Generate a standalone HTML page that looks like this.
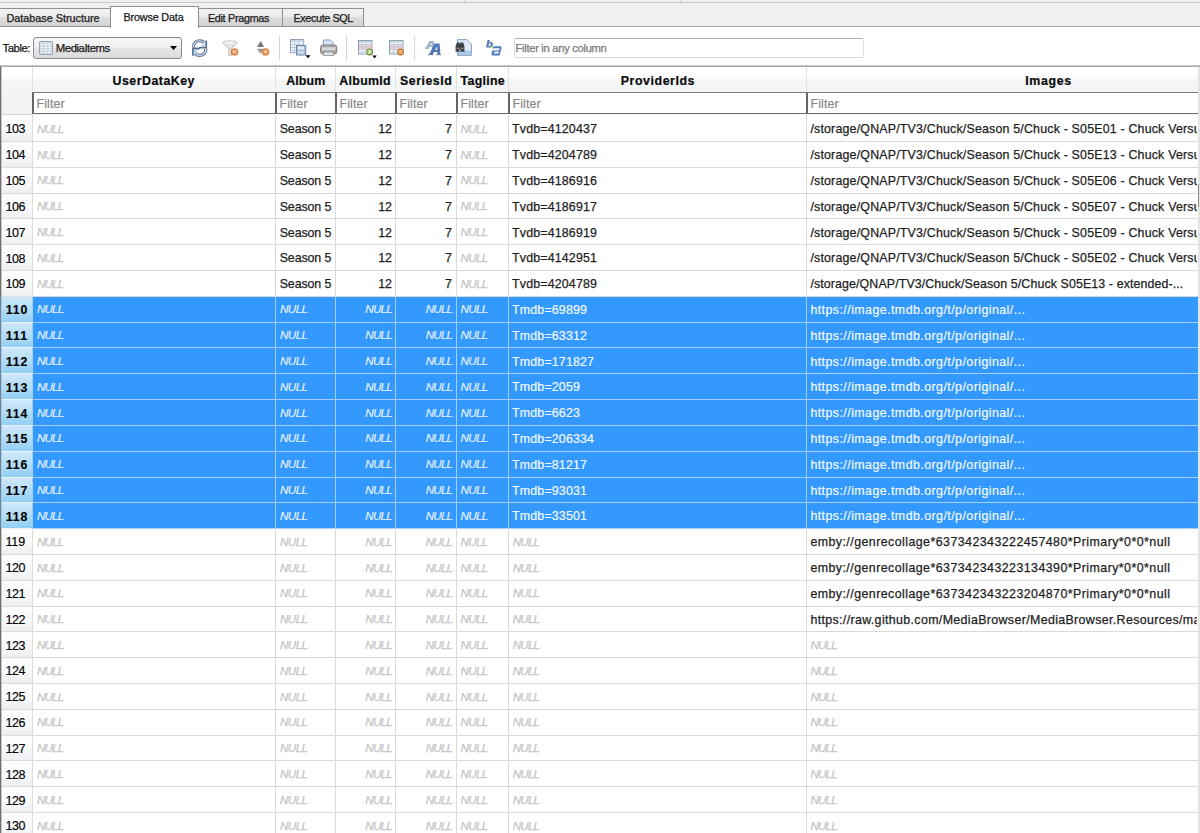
<!DOCTYPE html><html><head><meta charset="utf-8"><style>*{box-sizing:border-box;margin:0;padding:0}html,body{width:1200px;height:833px;overflow:hidden;background:#fff;font-family:"Liberation Sans",sans-serif}body{position:relative}.a{position:absolute}.t{position:absolute;white-space:pre;line-height:1}</style></head><body><div class="a" style="left:0;top:0;width:1200px;height:27px;background:#f0f0f0"></div><div class="a" style="left:0;top:2px;width:1200px;height:1px;background:#c9c9c9"></div><div class="a" style="left:464px;top:0;width:1px;height:2px;background:#d0d0d0"></div><div class="a" style="left:680px;top:0;width:1px;height:2px;background:#d0d0d0"></div><div class="a" style="left:0;top:26px;width:1200px;height:1px;background:#a7a7a7"></div><div class="a" style="left:-1px;top:8px;width:112px;height:19px;background:linear-gradient(#f2f2f2,#ebebeb 45%,#dedede 50%,#d2d2d2);border:1px solid #8e8f8f"></div><div class="a" style="left:198px;top:8px;width:85px;height:19px;background:linear-gradient(#f2f2f2,#ebebeb 45%,#dedede 50%,#d2d2d2);border:1px solid #8e8f8f"></div><div class="a" style="left:282px;top:8px;width:82px;height:19px;background:linear-gradient(#f2f2f2,#ebebeb 45%,#dedede 50%,#d2d2d2);border:1px solid #8e8f8f"></div><div class="a" style="left:110px;top:6px;width:89px;height:22px;background:#fff;border:1px solid #8e8f8f;border-bottom:none"></div><div class="t" style="left:6.50px;top:13.06px;font-size:10.8px;color:#1a1a1a;letter-spacing:-0.002px;-webkit-text-stroke:0.25px #1a1a1a">Database Structure</div><div class="t" style="left:123.50px;top:12.06px;font-size:10.8px;color:#1a1a1a;letter-spacing:-0.165px;-webkit-text-stroke:0.25px #1a1a1a">Browse Data</div><div class="t" style="left:207.90px;top:13.16px;font-size:10.8px;color:#1a1a1a;letter-spacing:-0.293px;-webkit-text-stroke:0.25px #1a1a1a">Edit Pragmas</div><div class="t" style="left:293.50px;top:13.06px;font-size:10.8px;color:#1a1a1a;letter-spacing:-0.375px;-webkit-text-stroke:0.25px #1a1a1a">Execute SQL</div><div class="t" style="left:2.50px;top:42.65px;font-size:11.4px;color:#1a1a1a;letter-spacing:-0.484px;-webkit-text-stroke:0.25px #1a1a1a">Table:</div><div class="a" style="left:33px;top:37px;width:149px;height:22px;border:1px solid #8a8a8a;border-radius:3px;background:linear-gradient(#f6f6f6,#efefef 50%,#e5e5e5 52%,#dcdcdc)"></div><svg class="a" style="left:39px;top:41px" width="14" height="14" viewBox="0 0 14 14">
<rect x="0.6" y="0.6" width="12.8" height="12.8" rx="1" fill="#eaf2fb" stroke="#98a3ae" stroke-width="1.1"/>
<rect x="1.2" y="1.2" width="11.6" height="1.8" fill="#d2dce6"/>
<path d="M1 5H13M1 7.6H13M1 10.2H13M4.6 3V13M8.6 3V13" stroke="#c0ccd8" stroke-width="0.8"/></svg><div class="t" style="left:55.80px;top:43.05px;font-size:11.4px;color:#1a1a1a;letter-spacing:-0.487px;-webkit-text-stroke:0.25px #1a1a1a">MediaItems</div><svg class="a" style="left:170px;top:46px" width="8" height="5" viewBox="0 0 8 5"><path d="M0 0H7L3.5 4Z" fill="#000"/></svg><svg class="a" style="left:191px;top:39px" width="17" height="18" viewBox="0 0 17 18"><g><path d="M2.3 8.4 C2.3 4.4 5 1.8 8.8 1.8 C10.6 1.8 12 2.5 13.2 3.8" fill="none" stroke="#5a6e92" stroke-width="3.1"/>
<path d="M2.3 8.4 C2.3 4.4 5 1.8 8.8 1.8 C10.6 1.8 12 2.5 13.2 3.8" fill="none" stroke="#d6e4f5" stroke-width="1.1"/>
<path d="M15.3 1.4 L15.3 8.8 L8.2 8.8 Z" fill="#c6d9f0"/>
<path d="M15.3 1.4 L15.3 8.8 L8.2 8.8" fill="none" stroke="#5a6e92" stroke-width="1.6"/></g><g transform="rotate(180 8.6 9.1)"><path d="M2.3 8.4 C2.3 4.4 5 1.8 8.8 1.8 C10.6 1.8 12 2.5 13.2 3.8" fill="none" stroke="#5a6e92" stroke-width="3.1"/>
<path d="M2.3 8.4 C2.3 4.4 5 1.8 8.8 1.8 C10.6 1.8 12 2.5 13.2 3.8" fill="none" stroke="#d6e4f5" stroke-width="1.1"/>
<path d="M15.3 1.4 L15.3 8.8 L8.2 8.8 Z" fill="#c6d9f0"/>
<path d="M15.3 1.4 L15.3 8.8 L8.2 8.8" fill="none" stroke="#5a6e92" stroke-width="1.6"/></g></svg><svg class="a" style="left:222px;top:40px" width="18" height="17" viewBox="0 0 18 17">
<path d="M1.2 2.6 C1.2 0.4 14.8 0.4 14.8 2.6 C14.8 4.2 10 7.5 9.3 8.6 L9.3 15.6 L6.8 15.6 L6.8 8.6 C6 7.5 1.2 4.2 1.2 2.6Z" fill="#e4e4e4" stroke="#bcbcbc" stroke-width="1"/>
<ellipse cx="8" cy="2.6" rx="5.5" ry="1.2" fill="#f4f4f4"/>
<circle cx="12.6" cy="11.9" r="3.7" fill="#c77a3e"/>
<circle cx="12.6" cy="11.7" r="2.6" fill="#eea36a"/>
<rect x="11" y="11.2" width="3.2" height="1.2" fill="#ffd9b0"/></svg><svg class="a" style="left:256px;top:40px" width="14" height="17" viewBox="0 0 14 17">
<path d="M1 7 L4.6 1 L8.2 7Z" fill="#767676"/>
<path d="M1 8.8 L7.6 8.8 L4.3 13.8Z" fill="#9c9c9c"/>
<circle cx="9.5" cy="11.9" r="3.7" fill="#c77a3e"/>
<circle cx="9.5" cy="11.7" r="2.6" fill="#eea36a"/>
<rect x="7.9" y="11.2" width="3.2" height="1.2" fill="#ffd9b0"/></svg><div class="a" style="left:279px;top:36px;width:1px;height:24px;background:#d6d6d6"></div><div class="a" style="left:346px;top:36px;width:1px;height:24px;background:#d6d6d6"></div><div class="a" style="left:414px;top:36px;width:1px;height:24px;background:#d6d6d6"></div><svg class="a" style="left:290px;top:39px" width="21" height="20" viewBox="0 0 21 20">
<rect x="0.5" y="0.5" width="13.2" height="13.2" fill="#eef4fb" stroke="#8ea0b4"/>
<rect x="1" y="1" width="12.2" height="2.2" fill="#c9d6e4"/>
<path d="M1 5.5H13M1 8.5H13M1 11.5H13M4.5 3V13M8.5 3V13" stroke="#b6c8dc" stroke-width="0.8"/>
<rect x="6.5" y="6.5" width="9.2" height="9.5" fill="#a9bcd4" stroke="#6f86a6"/>
<rect x="8" y="7.5" width="6" height="3" fill="#e6f0fa"/>
<rect x="8" y="12" width="6" height="3.2" fill="#c8d8e8"/>
<path d="M15.5 16.2H20.5L18 19.2Z" fill="#000"/></svg><svg class="a" style="left:320px;top:39px" width="18" height="18" viewBox="0 0 18 18">
<path d="M3.5 1H10.5L13 3.5V8H3.5Z" fill="#d6e6f7" stroke="#8c9db2"/>
<rect x="0.6" y="6" width="16.2" height="9" rx="2.5" fill="#a8a8a8" stroke="#7a7a7a" stroke-width="1"/>
<rect x="2" y="8.3" width="13.4" height="3" fill="#d9d9d9"/>
<rect x="3.5" y="13" width="10" height="3.5" fill="#dfe6ee" stroke="#8a8f96" stroke-width="0.8"/></svg><svg class="a" style="left:358px;top:40px" width="20" height="19" viewBox="0 0 20 19">
<rect x="0.5" y="0.5" width="13.5" height="13.5" fill="#f2f5f9" stroke="#8ea0b4"/>
<rect x="1" y="1" width="12.5" height="2" fill="#c7d6e2"/>
<rect x="1" y="5" width="12.5" height="4" fill="#f0cbd2"/>
<path d="M1 4.5H13.5M1 7H13.5M1 9.5H13.5M1 12H13.5M4.5 3V13.5M8.5 3V13.5" stroke="#b4c4d6" stroke-width="0.7"/>
<circle cx="11.6" cy="12" r="3.4" fill="#6c8a3c"/>
<circle cx="11.6" cy="11.8" r="2.4" fill="#c8eca0"/>
<path d="M14.3 15.6H18.8L16.55 18.6Z" fill="#000"/></svg><svg class="a" style="left:389px;top:40px" width="16" height="17" viewBox="0 0 16 17">
<rect x="0.5" y="0.5" width="13.5" height="13.5" fill="#f2f5f9" stroke="#8ea0b4"/>
<rect x="1" y="1" width="12.5" height="2" fill="#c7e0da"/>
<rect x="1" y="5" width="12.5" height="5" fill="#f0cbd2"/>
<path d="M1 4.5H13.5M1 7H13.5M1 9.5H13.5M1 12H13.5M4.5 3V13.5M8.5 3V13.5" stroke="#b4c4d6" stroke-width="0.7"/>
<circle cx="11.6" cy="12" r="3.4" fill="#bb7430"/>
<circle cx="11.6" cy="11.8" r="2.4" fill="#f2b070"/></svg><svg class="a" style="left:424px;top:40px" width="18" height="16" viewBox="0 0 18 16">
<path d="M1 9 L5.5 1 L10 1 L10.5 9 L8 9 L7.9 7 L5.2 7 L4.2 9Z M6.2 5.2 L7.8 5.2 L7.7 2.8Z" fill="#9fb3cc" fill-rule="evenodd"/>
<path d="M5 14.5 L10.5 3.6 L15.6 3.6 L16.4 14.5 L13.4 14.5 L13.3 12 L10 12 L8.6 14.5Z M11 9.8 L13.2 9.8 L13.1 6.4Z" fill="#5479b8" fill-rule="evenodd"/>
<path d="M4 14.6H9.2M12.4 14.6H17" stroke="#4a6aa0" stroke-width="0.9"/></svg><svg class="a" style="left:455px;top:39px" width="18" height="18" viewBox="0 0 18 18">
<path d="M2.5 0.6H12L16.4 5V16.4H2.5Z" fill="#dceaf8" stroke="#8c9fb6"/>
<rect x="3" y="11.6" width="13" height="4.3" fill="#a9c9ea"/>
<path d="M0.6 7 L2 3.5 L4.5 3.5 L5 5.5 L5.6 3.5 L8.2 3.5 L9.4 7 L9.4 12.8 L5.5 12.8 L5.5 10 L4.5 10 L4.5 12.8 L0.6 12.8Z" fill="#3a3f46"/>
<rect x="1.5" y="8.6" width="2.5" height="1.4" fill="#8a8f96"/><rect x="6" y="8.6" width="2.5" height="1.4" fill="#8a8f96"/></svg><svg class="a" style="left:486px;top:39px" width="17" height="17" viewBox="0 0 17 17">
<path d="M1.6 1 L3.8 1 L3.3 3.2 C4.5 2.6 7 2.8 7 5 C7 7.6 5 8.6 3.3 8.6 L0 8.6 Z M3 4.5 L2.4 7.2 C4 7.3 4.8 6.2 4.8 5.2 C4.8 4.4 3.8 4.2 3 4.5Z" fill="#5878b8" fill-rule="evenodd"/>
<path d="M5 7 L8 9.5" stroke="#8fcf7a" stroke-width="1.6"/>
<path d="M7.6 7.2 L15 7.2 L15.6 9 L13.6 16.4 L6 16.4 L5.4 14.5 L6.3 11.5 L13 11.2 L12.8 12.6 L8.4 12.7 L8 14.4 L12.4 14.4 L13.6 9.2 L7.2 9.2Z" fill="#4f7cc0"/></svg><div class="a" style="left:514px;top:38px;width:350px;height:20px;background:#fff;border:1px solid #dcdcdc;border-top-color:#b0b0b0;border-radius:2px"></div><div class="t" style="left:515.50px;top:43.02px;font-size:11.2px;color:#7a7a7a;letter-spacing:-0.300px;-webkit-text-stroke:0.25px #7a7a7a">Filter in any column</div><div class="a" style="left:0;top:65px;width:1200px;height:1px;background:#c8c8c8"></div><div class="a" style="left:0;top:66px;width:1200px;height:1px;background:#aaaaaa"></div><div class="a" style="left:0;top:66px;width:1px;height:767px;background:#707070"></div><div class="a" style="left:1px;top:66px;width:1px;height:767px;background:#c4c4c4"></div><div class="a" style="left:2px;top:67px;width:1196px;height:48px;background:linear-gradient(#ffffff,#ffffff 18%,#f4f5f7 30%,#f2f3f5)"></div><div class="a" style="left:2px;top:114px;width:31px;height:1px;background:#d5d5d5"></div><div class="a" style="left:1198px;top:67px;width:2px;height:766px;background:#e4e4e4"></div><div class="a" style="left:32.0px;top:67px;width:1px;height:26px;background:#e1e2e4"></div><div class="a" style="left:275.0px;top:67px;width:1px;height:26px;background:#e1e2e4"></div><div class="a" style="left:335.0px;top:67px;width:1px;height:26px;background:#e1e2e4"></div><div class="a" style="left:395.0px;top:67px;width:1px;height:26px;background:#e1e2e4"></div><div class="a" style="left:456.0px;top:67px;width:1px;height:26px;background:#e1e2e4"></div><div class="a" style="left:508.0px;top:67px;width:1px;height:26px;background:#e1e2e4"></div><div class="a" style="left:806.0px;top:67px;width:1px;height:26px;background:#e1e2e4"></div><div class="t" style="left:112.50px;top:74.50px;font-size:12.4px;color:#0a0a0a;letter-spacing:0.487px;font-weight:700;-webkit-text-stroke:0.2px #0a0a0a">UserDataKey</div><div class="t" style="left:286.25px;top:74.50px;font-size:12.4px;color:#0a0a0a;letter-spacing:0.111px;font-weight:700;-webkit-text-stroke:0.2px #0a0a0a">Album</div><div class="t" style="left:339.30px;top:74.50px;font-size:12.4px;color:#0a0a0a;letter-spacing:0.305px;font-weight:700;-webkit-text-stroke:0.2px #0a0a0a">AlbumId</div><div class="t" style="left:400.00px;top:74.50px;font-size:12.4px;color:#0a0a0a;letter-spacing:0.504px;font-weight:700;-webkit-text-stroke:0.2px #0a0a0a">SeriesId</div><div class="t" style="left:460.60px;top:74.50px;font-size:12.4px;color:#0a0a0a;letter-spacing:0.278px;font-weight:700;-webkit-text-stroke:0.2px #0a0a0a">Tagline</div><div class="t" style="left:620.80px;top:74.50px;font-size:12.4px;color:#0a0a0a;letter-spacing:0.547px;font-weight:700;-webkit-text-stroke:0.2px #0a0a0a">ProviderIds</div><div class="t" style="left:1025.30px;top:74.50px;font-size:12.4px;color:#0a0a0a;letter-spacing:0.616px;font-weight:700;-webkit-text-stroke:0.2px #0a0a0a">Images</div><div class="a" style="left:32.0px;top:92px;width:244.0px;height:22px;background:#fff;border-left:2px solid #666;border-top:1px solid #7c7c7c;border-bottom:1px solid #707070"></div><div class="t" style="left:36.60px;top:97.60px;font-size:12.4px;color:#858585;letter-spacing:0.076px;-webkit-text-stroke:0.15px #858585">Filter</div><div class="a" style="left:275.0px;top:92px;width:61.0px;height:22px;background:#fff;border-left:2px solid #666;border-top:1px solid #7c7c7c;border-bottom:1px solid #707070"></div><div class="t" style="left:279.60px;top:97.60px;font-size:12.4px;color:#858585;letter-spacing:0.076px;-webkit-text-stroke:0.15px #858585">Filter</div><div class="a" style="left:335.0px;top:92px;width:61.0px;height:22px;background:#fff;border-left:2px solid #666;border-top:1px solid #7c7c7c;border-bottom:1px solid #707070"></div><div class="t" style="left:339.60px;top:97.60px;font-size:12.4px;color:#858585;letter-spacing:0.076px;-webkit-text-stroke:0.15px #858585">Filter</div><div class="a" style="left:395.0px;top:92px;width:62.0px;height:22px;background:#fff;border-left:2px solid #666;border-top:1px solid #7c7c7c;border-bottom:1px solid #707070"></div><div class="t" style="left:399.60px;top:97.60px;font-size:12.4px;color:#858585;letter-spacing:0.076px;-webkit-text-stroke:0.15px #858585">Filter</div><div class="a" style="left:456.0px;top:92px;width:53.0px;height:22px;background:#fff;border-left:2px solid #666;border-top:1px solid #7c7c7c;border-bottom:1px solid #707070"></div><div class="t" style="left:460.60px;top:97.60px;font-size:12.4px;color:#858585;letter-spacing:0.076px;-webkit-text-stroke:0.15px #858585">Filter</div><div class="a" style="left:508.0px;top:92px;width:299.0px;height:22px;background:#fff;border-left:2px solid #666;border-top:1px solid #7c7c7c;border-bottom:1px solid #707070"></div><div class="t" style="left:512.60px;top:97.60px;font-size:12.4px;color:#858585;letter-spacing:0.076px;-webkit-text-stroke:0.15px #858585">Filter</div><div class="a" style="left:806.0px;top:92px;width:391.5px;height:22px;background:#fff;border-left:2px solid #666;border-top:1px solid #7c7c7c;border-bottom:1px solid #707070"></div><div class="t" style="left:810.60px;top:97.60px;font-size:12.4px;color:#858585;letter-spacing:0.076px;-webkit-text-stroke:0.15px #858585">Filter</div><div class="a" style="left:2px;top:116.19px;width:30px;height:24.81px;background:linear-gradient(#fdfdfd,#f9f9fa 55%,#eceef1)"></div><div class="a" style="left:2px;top:141.00px;width:30px;height:1px;background:#dcdcdc"></div><div class="a" style="left:32px;top:141.00px;width:1166px;height:1px;background:#d9d9d9"></div><div class="a" style="left:32px;top:115.19px;width:1px;height:25.81px;background:#dcdcdc"></div><div class="a" style="left:275.0px;top:115.19px;width:1px;height:25.81px;background:#dadada"></div><div class="a" style="left:335.0px;top:115.19px;width:1px;height:25.81px;background:#dadada"></div><div class="a" style="left:395.0px;top:115.19px;width:1px;height:25.81px;background:#dadada"></div><div class="a" style="left:456.0px;top:115.19px;width:1px;height:25.81px;background:#dadada"></div><div class="a" style="left:508.0px;top:115.19px;width:1px;height:25.81px;background:#dadada"></div><div class="a" style="left:806.0px;top:115.19px;width:1px;height:25.81px;background:#dadada"></div><div class="t" style="left:5.40px;top:123.46px;font-size:12.5px;color:#000;letter-spacing:-0.353px;-webkit-text-stroke:0.15px #000">103</div><div class="t" style="left:36.90px;top:122.77px;font-size:11.6px;color:#c4c4c4;letter-spacing:-0.764px;font-style:italic;-webkit-text-stroke:0.25px #c4c4c4">NULL</div><div class="t" style="left:279.70px;top:123.29px;font-size:12.4px;color:#1e1e1e;letter-spacing:-0.095px;-webkit-text-stroke:0.25px #1e1e1e">Season 5</div><div class="t" style="left:378.30px;top:123.29px;font-size:12.4px;color:#1e1e1e;letter-spacing:-0.298px;-webkit-text-stroke:0.25px #1e1e1e">12</div><div class="t" style="left:445.00px;top:123.29px;font-size:12.4px;color:#1e1e1e;letter-spacing:0.394px;-webkit-text-stroke:0.25px #1e1e1e">7</div><div class="t" style="left:460.60px;top:122.77px;font-size:11.6px;color:#c4c4c4;letter-spacing:-0.639px;font-style:italic;-webkit-text-stroke:0.25px #c4c4c4">NULL</div><div class="t" style="left:512.10px;top:123.29px;font-size:12.4px;color:#1e1e1e;letter-spacing:0.164px;-webkit-text-stroke:0.25px #1e1e1e">Tvdb=4120437</div><div class="a" style="left:0;top:0;width:1197px;height:833px;overflow:hidden"><div class="t" style="left:810.40px;top:123.29px;font-size:12.4px;color:#1e1e1e;letter-spacing:0.190px;-webkit-text-stroke:0.25px #1e1e1e">/storage/QNAP/TV3/Chuck/Season 5/Chuck - S05E01 - Chuck Versus the Zoom</div></div><div class="a" style="left:2px;top:142.00px;width:30px;height:24.81px;background:linear-gradient(#fdfdfd,#f9f9fa 55%,#eceef1)"></div><div class="a" style="left:2px;top:166.81px;width:30px;height:1px;background:#dcdcdc"></div><div class="a" style="left:32px;top:166.81px;width:1166px;height:1px;background:#d9d9d9"></div><div class="a" style="left:32px;top:141.00px;width:1px;height:25.81px;background:#dcdcdc"></div><div class="a" style="left:275.0px;top:141.00px;width:1px;height:25.81px;background:#dadada"></div><div class="a" style="left:335.0px;top:141.00px;width:1px;height:25.81px;background:#dadada"></div><div class="a" style="left:395.0px;top:141.00px;width:1px;height:25.81px;background:#dadada"></div><div class="a" style="left:456.0px;top:141.00px;width:1px;height:25.81px;background:#dadada"></div><div class="a" style="left:508.0px;top:141.00px;width:1px;height:25.81px;background:#dadada"></div><div class="a" style="left:806.0px;top:141.00px;width:1px;height:25.81px;background:#dadada"></div><div class="t" style="left:5.40px;top:149.27px;font-size:12.5px;color:#000;letter-spacing:-0.353px;-webkit-text-stroke:0.15px #000">104</div><div class="t" style="left:36.90px;top:148.58px;font-size:11.6px;color:#c4c4c4;letter-spacing:-0.764px;font-style:italic;-webkit-text-stroke:0.25px #c4c4c4">NULL</div><div class="t" style="left:279.70px;top:149.10px;font-size:12.4px;color:#1e1e1e;letter-spacing:-0.095px;-webkit-text-stroke:0.25px #1e1e1e">Season 5</div><div class="t" style="left:378.30px;top:149.10px;font-size:12.4px;color:#1e1e1e;letter-spacing:-0.298px;-webkit-text-stroke:0.25px #1e1e1e">12</div><div class="t" style="left:445.00px;top:149.10px;font-size:12.4px;color:#1e1e1e;letter-spacing:0.394px;-webkit-text-stroke:0.25px #1e1e1e">7</div><div class="t" style="left:460.60px;top:148.58px;font-size:11.6px;color:#c4c4c4;letter-spacing:-0.639px;font-style:italic;-webkit-text-stroke:0.25px #c4c4c4">NULL</div><div class="t" style="left:512.10px;top:149.10px;font-size:12.4px;color:#1e1e1e;letter-spacing:0.164px;-webkit-text-stroke:0.25px #1e1e1e">Tvdb=4204789</div><div class="a" style="left:0;top:0;width:1197px;height:833px;overflow:hidden"><div class="t" style="left:810.40px;top:149.10px;font-size:12.4px;color:#1e1e1e;letter-spacing:0.190px;-webkit-text-stroke:0.25px #1e1e1e">/storage/QNAP/TV3/Chuck/Season 5/Chuck - S05E13 - Chuck Versus the Goodbye</div></div><div class="a" style="left:2px;top:167.81px;width:30px;height:24.81px;background:linear-gradient(#fdfdfd,#f9f9fa 55%,#eceef1)"></div><div class="a" style="left:2px;top:192.62px;width:30px;height:1px;background:#dcdcdc"></div><div class="a" style="left:32px;top:192.62px;width:1166px;height:1px;background:#d9d9d9"></div><div class="a" style="left:32px;top:166.81px;width:1px;height:25.81px;background:#dcdcdc"></div><div class="a" style="left:275.0px;top:166.81px;width:1px;height:25.81px;background:#dadada"></div><div class="a" style="left:335.0px;top:166.81px;width:1px;height:25.81px;background:#dadada"></div><div class="a" style="left:395.0px;top:166.81px;width:1px;height:25.81px;background:#dadada"></div><div class="a" style="left:456.0px;top:166.81px;width:1px;height:25.81px;background:#dadada"></div><div class="a" style="left:508.0px;top:166.81px;width:1px;height:25.81px;background:#dadada"></div><div class="a" style="left:806.0px;top:166.81px;width:1px;height:25.81px;background:#dadada"></div><div class="t" style="left:5.40px;top:175.08px;font-size:12.5px;color:#000;letter-spacing:-0.353px;-webkit-text-stroke:0.15px #000">105</div><div class="t" style="left:36.90px;top:174.39px;font-size:11.6px;color:#c4c4c4;letter-spacing:-0.764px;font-style:italic;-webkit-text-stroke:0.25px #c4c4c4">NULL</div><div class="t" style="left:279.70px;top:174.91px;font-size:12.4px;color:#1e1e1e;letter-spacing:-0.095px;-webkit-text-stroke:0.25px #1e1e1e">Season 5</div><div class="t" style="left:378.30px;top:174.91px;font-size:12.4px;color:#1e1e1e;letter-spacing:-0.298px;-webkit-text-stroke:0.25px #1e1e1e">12</div><div class="t" style="left:445.00px;top:174.91px;font-size:12.4px;color:#1e1e1e;letter-spacing:0.394px;-webkit-text-stroke:0.25px #1e1e1e">7</div><div class="t" style="left:460.60px;top:174.39px;font-size:11.6px;color:#c4c4c4;letter-spacing:-0.639px;font-style:italic;-webkit-text-stroke:0.25px #c4c4c4">NULL</div><div class="t" style="left:512.10px;top:174.91px;font-size:12.4px;color:#1e1e1e;letter-spacing:0.164px;-webkit-text-stroke:0.25px #1e1e1e">Tvdb=4186916</div><div class="a" style="left:0;top:0;width:1197px;height:833px;overflow:hidden"><div class="t" style="left:810.40px;top:174.91px;font-size:12.4px;color:#1e1e1e;letter-spacing:0.190px;-webkit-text-stroke:0.25px #1e1e1e">/storage/QNAP/TV3/Chuck/Season 5/Chuck - S05E06 - Chuck Versus the Hack Off</div></div><div class="a" style="left:2px;top:193.62px;width:30px;height:24.81px;background:linear-gradient(#fdfdfd,#f9f9fa 55%,#eceef1)"></div><div class="a" style="left:2px;top:218.43px;width:30px;height:1px;background:#dcdcdc"></div><div class="a" style="left:32px;top:218.43px;width:1166px;height:1px;background:#d9d9d9"></div><div class="a" style="left:32px;top:192.62px;width:1px;height:25.81px;background:#dcdcdc"></div><div class="a" style="left:275.0px;top:192.62px;width:1px;height:25.81px;background:#dadada"></div><div class="a" style="left:335.0px;top:192.62px;width:1px;height:25.81px;background:#dadada"></div><div class="a" style="left:395.0px;top:192.62px;width:1px;height:25.81px;background:#dadada"></div><div class="a" style="left:456.0px;top:192.62px;width:1px;height:25.81px;background:#dadada"></div><div class="a" style="left:508.0px;top:192.62px;width:1px;height:25.81px;background:#dadada"></div><div class="a" style="left:806.0px;top:192.62px;width:1px;height:25.81px;background:#dadada"></div><div class="t" style="left:5.40px;top:200.89px;font-size:12.5px;color:#000;letter-spacing:-0.353px;-webkit-text-stroke:0.15px #000">106</div><div class="t" style="left:36.90px;top:200.20px;font-size:11.6px;color:#c4c4c4;letter-spacing:-0.764px;font-style:italic;-webkit-text-stroke:0.25px #c4c4c4">NULL</div><div class="t" style="left:279.70px;top:200.72px;font-size:12.4px;color:#1e1e1e;letter-spacing:-0.095px;-webkit-text-stroke:0.25px #1e1e1e">Season 5</div><div class="t" style="left:378.30px;top:200.72px;font-size:12.4px;color:#1e1e1e;letter-spacing:-0.298px;-webkit-text-stroke:0.25px #1e1e1e">12</div><div class="t" style="left:445.00px;top:200.72px;font-size:12.4px;color:#1e1e1e;letter-spacing:0.394px;-webkit-text-stroke:0.25px #1e1e1e">7</div><div class="t" style="left:460.60px;top:200.20px;font-size:11.6px;color:#c4c4c4;letter-spacing:-0.639px;font-style:italic;-webkit-text-stroke:0.25px #c4c4c4">NULL</div><div class="t" style="left:512.10px;top:200.72px;font-size:12.4px;color:#1e1e1e;letter-spacing:0.164px;-webkit-text-stroke:0.25px #1e1e1e">Tvdb=4186917</div><div class="a" style="left:0;top:0;width:1197px;height:833px;overflow:hidden"><div class="t" style="left:810.40px;top:200.72px;font-size:12.4px;color:#1e1e1e;letter-spacing:0.190px;-webkit-text-stroke:0.25px #1e1e1e">/storage/QNAP/TV3/Chuck/Season 5/Chuck - S05E07 - Chuck Versus the Baby</div></div><div class="a" style="left:2px;top:219.43px;width:30px;height:24.81px;background:linear-gradient(#fdfdfd,#f9f9fa 55%,#eceef1)"></div><div class="a" style="left:2px;top:244.24px;width:30px;height:1px;background:#dcdcdc"></div><div class="a" style="left:32px;top:244.24px;width:1166px;height:1px;background:#d9d9d9"></div><div class="a" style="left:32px;top:218.43px;width:1px;height:25.81px;background:#dcdcdc"></div><div class="a" style="left:275.0px;top:218.43px;width:1px;height:25.81px;background:#dadada"></div><div class="a" style="left:335.0px;top:218.43px;width:1px;height:25.81px;background:#dadada"></div><div class="a" style="left:395.0px;top:218.43px;width:1px;height:25.81px;background:#dadada"></div><div class="a" style="left:456.0px;top:218.43px;width:1px;height:25.81px;background:#dadada"></div><div class="a" style="left:508.0px;top:218.43px;width:1px;height:25.81px;background:#dadada"></div><div class="a" style="left:806.0px;top:218.43px;width:1px;height:25.81px;background:#dadada"></div><div class="t" style="left:5.40px;top:226.70px;font-size:12.5px;color:#000;letter-spacing:-0.353px;-webkit-text-stroke:0.15px #000">107</div><div class="t" style="left:36.90px;top:226.01px;font-size:11.6px;color:#c4c4c4;letter-spacing:-0.764px;font-style:italic;-webkit-text-stroke:0.25px #c4c4c4">NULL</div><div class="t" style="left:279.70px;top:226.53px;font-size:12.4px;color:#1e1e1e;letter-spacing:-0.095px;-webkit-text-stroke:0.25px #1e1e1e">Season 5</div><div class="t" style="left:378.30px;top:226.53px;font-size:12.4px;color:#1e1e1e;letter-spacing:-0.298px;-webkit-text-stroke:0.25px #1e1e1e">12</div><div class="t" style="left:445.00px;top:226.53px;font-size:12.4px;color:#1e1e1e;letter-spacing:0.394px;-webkit-text-stroke:0.25px #1e1e1e">7</div><div class="t" style="left:460.60px;top:226.01px;font-size:11.6px;color:#c4c4c4;letter-spacing:-0.639px;font-style:italic;-webkit-text-stroke:0.25px #c4c4c4">NULL</div><div class="t" style="left:512.10px;top:226.53px;font-size:12.4px;color:#1e1e1e;letter-spacing:0.164px;-webkit-text-stroke:0.25px #1e1e1e">Tvdb=4186919</div><div class="a" style="left:0;top:0;width:1197px;height:833px;overflow:hidden"><div class="t" style="left:810.40px;top:226.53px;font-size:12.4px;color:#1e1e1e;letter-spacing:0.190px;-webkit-text-stroke:0.25px #1e1e1e">/storage/QNAP/TV3/Chuck/Season 5/Chuck - S05E09 - Chuck Versus the Kept Man</div></div><div class="a" style="left:2px;top:245.24px;width:30px;height:24.81px;background:linear-gradient(#fdfdfd,#f9f9fa 55%,#eceef1)"></div><div class="a" style="left:2px;top:270.05px;width:30px;height:1px;background:#dcdcdc"></div><div class="a" style="left:32px;top:270.05px;width:1166px;height:1px;background:#d9d9d9"></div><div class="a" style="left:32px;top:244.24px;width:1px;height:25.81px;background:#dcdcdc"></div><div class="a" style="left:275.0px;top:244.24px;width:1px;height:25.81px;background:#dadada"></div><div class="a" style="left:335.0px;top:244.24px;width:1px;height:25.81px;background:#dadada"></div><div class="a" style="left:395.0px;top:244.24px;width:1px;height:25.81px;background:#dadada"></div><div class="a" style="left:456.0px;top:244.24px;width:1px;height:25.81px;background:#dadada"></div><div class="a" style="left:508.0px;top:244.24px;width:1px;height:25.81px;background:#dadada"></div><div class="a" style="left:806.0px;top:244.24px;width:1px;height:25.81px;background:#dadada"></div><div class="t" style="left:5.40px;top:252.51px;font-size:12.5px;color:#000;letter-spacing:-0.353px;-webkit-text-stroke:0.15px #000">108</div><div class="t" style="left:36.90px;top:251.82px;font-size:11.6px;color:#c4c4c4;letter-spacing:-0.764px;font-style:italic;-webkit-text-stroke:0.25px #c4c4c4">NULL</div><div class="t" style="left:279.70px;top:252.34px;font-size:12.4px;color:#1e1e1e;letter-spacing:-0.095px;-webkit-text-stroke:0.25px #1e1e1e">Season 5</div><div class="t" style="left:378.30px;top:252.34px;font-size:12.4px;color:#1e1e1e;letter-spacing:-0.298px;-webkit-text-stroke:0.25px #1e1e1e">12</div><div class="t" style="left:445.00px;top:252.34px;font-size:12.4px;color:#1e1e1e;letter-spacing:0.394px;-webkit-text-stroke:0.25px #1e1e1e">7</div><div class="t" style="left:460.60px;top:251.82px;font-size:11.6px;color:#c4c4c4;letter-spacing:-0.639px;font-style:italic;-webkit-text-stroke:0.25px #c4c4c4">NULL</div><div class="t" style="left:512.10px;top:252.34px;font-size:12.4px;color:#1e1e1e;letter-spacing:0.164px;-webkit-text-stroke:0.25px #1e1e1e">Tvdb=4142951</div><div class="a" style="left:0;top:0;width:1197px;height:833px;overflow:hidden"><div class="t" style="left:810.40px;top:252.34px;font-size:12.4px;color:#1e1e1e;letter-spacing:0.190px;-webkit-text-stroke:0.25px #1e1e1e">/storage/QNAP/TV3/Chuck/Season 5/Chuck - S05E02 - Chuck Versus the Frosted Tips</div></div><div class="a" style="left:2px;top:271.05px;width:30px;height:24.81px;background:linear-gradient(#fdfdfd,#f9f9fa 55%,#eceef1)"></div><div class="a" style="left:2px;top:295.86px;width:30px;height:1px;background:#dcdcdc"></div><div class="a" style="left:32px;top:295.86px;width:1166px;height:1px;background:#d9d9d9"></div><div class="a" style="left:32px;top:270.05px;width:1px;height:25.81px;background:#dcdcdc"></div><div class="a" style="left:275.0px;top:270.05px;width:1px;height:25.81px;background:#dadada"></div><div class="a" style="left:335.0px;top:270.05px;width:1px;height:25.81px;background:#dadada"></div><div class="a" style="left:395.0px;top:270.05px;width:1px;height:25.81px;background:#dadada"></div><div class="a" style="left:456.0px;top:270.05px;width:1px;height:25.81px;background:#dadada"></div><div class="a" style="left:508.0px;top:270.05px;width:1px;height:25.81px;background:#dadada"></div><div class="a" style="left:806.0px;top:270.05px;width:1px;height:25.81px;background:#dadada"></div><div class="t" style="left:5.40px;top:278.32px;font-size:12.5px;color:#000;letter-spacing:-0.353px;-webkit-text-stroke:0.15px #000">109</div><div class="t" style="left:36.90px;top:277.63px;font-size:11.6px;color:#c4c4c4;letter-spacing:-0.764px;font-style:italic;-webkit-text-stroke:0.25px #c4c4c4">NULL</div><div class="t" style="left:279.70px;top:278.15px;font-size:12.4px;color:#1e1e1e;letter-spacing:-0.095px;-webkit-text-stroke:0.25px #1e1e1e">Season 5</div><div class="t" style="left:378.30px;top:278.15px;font-size:12.4px;color:#1e1e1e;letter-spacing:-0.298px;-webkit-text-stroke:0.25px #1e1e1e">12</div><div class="t" style="left:445.00px;top:278.15px;font-size:12.4px;color:#1e1e1e;letter-spacing:0.394px;-webkit-text-stroke:0.25px #1e1e1e">7</div><div class="t" style="left:460.60px;top:277.63px;font-size:11.6px;color:#c4c4c4;letter-spacing:-0.639px;font-style:italic;-webkit-text-stroke:0.25px #c4c4c4">NULL</div><div class="t" style="left:512.10px;top:278.15px;font-size:12.4px;color:#1e1e1e;letter-spacing:0.164px;-webkit-text-stroke:0.25px #1e1e1e">Tvdb=4204789</div><div class="a" style="left:0;top:0;width:1197px;height:833px;overflow:hidden"><div class="t" style="left:810.40px;top:278.15px;font-size:12.4px;color:#1e1e1e;letter-spacing:0.110px;-webkit-text-stroke:0.25px #1e1e1e">/storage/QNAP/TV3/Chuck/Season 5/Chuck S05E13 - extended-...</div></div><div class="a" style="left:2px;top:296.86px;width:30px;height:24.81px;background:linear-gradient(#cfe8f9,#b8dff7 40%,#92cff3)"></div><div class="a" style="left:2px;top:321.67px;width:30px;height:1px;background:#e8f4fc"></div><div class="a" style="left:0;top:295.86px;width:1px;height:25.81px;background:#6a8299"></div><div class="a" style="left:1px;top:295.86px;width:1px;height:25.81px;background:#a9cbe4"></div><div class="a" style="left:33px;top:296.86px;width:1165px;height:24.81px;background:#3399ff"></div><div class="a" style="left:32px;top:321.67px;width:1166px;height:1px;background:#a6d0fa"></div><div class="a" style="left:32px;top:295.86px;width:1px;height:25.81px;background:#a6d0fa"></div><div class="a" style="left:275.0px;top:295.86px;width:1px;height:25.81px;background:#a6d0fa"></div><div class="a" style="left:335.0px;top:295.86px;width:1px;height:25.81px;background:#a6d0fa"></div><div class="a" style="left:395.0px;top:295.86px;width:1px;height:25.81px;background:#a6d0fa"></div><div class="a" style="left:456.0px;top:295.86px;width:1px;height:25.81px;background:#a6d0fa"></div><div class="a" style="left:508.0px;top:295.86px;width:1px;height:25.81px;background:#a6d0fa"></div><div class="a" style="left:806.0px;top:295.86px;width:1px;height:25.81px;background:#a6d0fa"></div><div class="t" style="left:5.80px;top:304.30px;font-size:12.3px;color:#000;letter-spacing:0.819px;font-weight:700;-webkit-text-stroke:0.15px #000">110</div><div class="t" style="left:36.90px;top:303.44px;font-size:11.6px;color:#e2f0ff;letter-spacing:-0.764px;font-style:italic;-webkit-text-stroke:0.18px #e2f0ff">NULL</div><div class="t" style="left:280.00px;top:303.44px;font-size:11.6px;color:#e2f0ff;letter-spacing:-0.539px;font-style:italic;-webkit-text-stroke:0.18px #e2f0ff">NULL</div><div class="t" style="left:365.30px;top:303.44px;font-size:11.6px;color:#e2f0ff;letter-spacing:-0.764px;font-style:italic;-webkit-text-stroke:0.18px #e2f0ff">NULL</div><div class="t" style="left:425.70px;top:303.44px;font-size:11.6px;color:#e2f0ff;letter-spacing:-0.764px;font-style:italic;-webkit-text-stroke:0.18px #e2f0ff">NULL</div><div class="t" style="left:460.60px;top:303.44px;font-size:11.6px;color:#e2f0ff;letter-spacing:-0.639px;font-style:italic;-webkit-text-stroke:0.18px #e2f0ff">NULL</div><div class="t" style="left:512.10px;top:303.96px;font-size:12.4px;color:#f4f9ff;letter-spacing:0.160px;-webkit-text-stroke:0.18px #f4f9ff">Tmdb=69899</div><div class="a" style="left:0;top:0;width:1197px;height:833px;overflow:hidden"><div class="t" style="left:810.40px;top:303.96px;font-size:12.4px;color:#f4f9ff;letter-spacing:0.444px;-webkit-text-stroke:0.18px #f4f9ff">https://image.tmdb.org/t/p/original/...</div></div><div class="a" style="left:2px;top:322.67px;width:30px;height:24.81px;background:linear-gradient(#cfe8f9,#b8dff7 40%,#92cff3)"></div><div class="a" style="left:2px;top:347.48px;width:30px;height:1px;background:#e8f4fc"></div><div class="a" style="left:0;top:321.67px;width:1px;height:25.81px;background:#6a8299"></div><div class="a" style="left:1px;top:321.67px;width:1px;height:25.81px;background:#a9cbe4"></div><div class="a" style="left:33px;top:322.67px;width:1165px;height:24.81px;background:#3399ff"></div><div class="a" style="left:32px;top:347.48px;width:1166px;height:1px;background:#a6d0fa"></div><div class="a" style="left:32px;top:321.67px;width:1px;height:25.81px;background:#a6d0fa"></div><div class="a" style="left:275.0px;top:321.67px;width:1px;height:25.81px;background:#a6d0fa"></div><div class="a" style="left:335.0px;top:321.67px;width:1px;height:25.81px;background:#a6d0fa"></div><div class="a" style="left:395.0px;top:321.67px;width:1px;height:25.81px;background:#a6d0fa"></div><div class="a" style="left:456.0px;top:321.67px;width:1px;height:25.81px;background:#a6d0fa"></div><div class="a" style="left:508.0px;top:321.67px;width:1px;height:25.81px;background:#a6d0fa"></div><div class="a" style="left:806.0px;top:321.67px;width:1px;height:25.81px;background:#a6d0fa"></div><div class="t" style="left:5.80px;top:330.11px;font-size:12.3px;color:#000;letter-spacing:1.043px;font-weight:700;-webkit-text-stroke:0.15px #000">111</div><div class="t" style="left:36.90px;top:329.25px;font-size:11.6px;color:#e2f0ff;letter-spacing:-0.764px;font-style:italic;-webkit-text-stroke:0.18px #e2f0ff">NULL</div><div class="t" style="left:280.00px;top:329.25px;font-size:11.6px;color:#e2f0ff;letter-spacing:-0.539px;font-style:italic;-webkit-text-stroke:0.18px #e2f0ff">NULL</div><div class="t" style="left:365.30px;top:329.25px;font-size:11.6px;color:#e2f0ff;letter-spacing:-0.764px;font-style:italic;-webkit-text-stroke:0.18px #e2f0ff">NULL</div><div class="t" style="left:425.70px;top:329.25px;font-size:11.6px;color:#e2f0ff;letter-spacing:-0.764px;font-style:italic;-webkit-text-stroke:0.18px #e2f0ff">NULL</div><div class="t" style="left:460.60px;top:329.25px;font-size:11.6px;color:#e2f0ff;letter-spacing:-0.639px;font-style:italic;-webkit-text-stroke:0.18px #e2f0ff">NULL</div><div class="t" style="left:512.10px;top:329.77px;font-size:12.4px;color:#f4f9ff;letter-spacing:0.160px;-webkit-text-stroke:0.18px #f4f9ff">Tmdb=63312</div><div class="a" style="left:0;top:0;width:1197px;height:833px;overflow:hidden"><div class="t" style="left:810.40px;top:329.77px;font-size:12.4px;color:#f4f9ff;letter-spacing:0.444px;-webkit-text-stroke:0.18px #f4f9ff">https://image.tmdb.org/t/p/original/...</div></div><div class="a" style="left:2px;top:348.48px;width:30px;height:24.81px;background:linear-gradient(#cfe8f9,#b8dff7 40%,#92cff3)"></div><div class="a" style="left:2px;top:373.29px;width:30px;height:1px;background:#e8f4fc"></div><div class="a" style="left:0;top:347.48px;width:1px;height:25.81px;background:#6a8299"></div><div class="a" style="left:1px;top:347.48px;width:1px;height:25.81px;background:#a9cbe4"></div><div class="a" style="left:33px;top:348.48px;width:1165px;height:24.81px;background:#3399ff"></div><div class="a" style="left:32px;top:373.29px;width:1166px;height:1px;background:#a6d0fa"></div><div class="a" style="left:32px;top:347.48px;width:1px;height:25.81px;background:#a6d0fa"></div><div class="a" style="left:275.0px;top:347.48px;width:1px;height:25.81px;background:#a6d0fa"></div><div class="a" style="left:335.0px;top:347.48px;width:1px;height:25.81px;background:#a6d0fa"></div><div class="a" style="left:395.0px;top:347.48px;width:1px;height:25.81px;background:#a6d0fa"></div><div class="a" style="left:456.0px;top:347.48px;width:1px;height:25.81px;background:#a6d0fa"></div><div class="a" style="left:508.0px;top:347.48px;width:1px;height:25.81px;background:#a6d0fa"></div><div class="a" style="left:806.0px;top:347.48px;width:1px;height:25.81px;background:#a6d0fa"></div><div class="t" style="left:5.80px;top:355.92px;font-size:12.3px;color:#000;letter-spacing:0.819px;font-weight:700;-webkit-text-stroke:0.15px #000">112</div><div class="t" style="left:36.90px;top:355.06px;font-size:11.6px;color:#e2f0ff;letter-spacing:-0.764px;font-style:italic;-webkit-text-stroke:0.18px #e2f0ff">NULL</div><div class="t" style="left:280.00px;top:355.06px;font-size:11.6px;color:#e2f0ff;letter-spacing:-0.539px;font-style:italic;-webkit-text-stroke:0.18px #e2f0ff">NULL</div><div class="t" style="left:365.30px;top:355.06px;font-size:11.6px;color:#e2f0ff;letter-spacing:-0.764px;font-style:italic;-webkit-text-stroke:0.18px #e2f0ff">NULL</div><div class="t" style="left:425.70px;top:355.06px;font-size:11.6px;color:#e2f0ff;letter-spacing:-0.764px;font-style:italic;-webkit-text-stroke:0.18px #e2f0ff">NULL</div><div class="t" style="left:460.60px;top:355.06px;font-size:11.6px;color:#e2f0ff;letter-spacing:-0.639px;font-style:italic;-webkit-text-stroke:0.18px #e2f0ff">NULL</div><div class="t" style="left:512.10px;top:355.58px;font-size:12.4px;color:#f4f9ff;letter-spacing:0.160px;-webkit-text-stroke:0.18px #f4f9ff">Tmdb=171827</div><div class="a" style="left:0;top:0;width:1197px;height:833px;overflow:hidden"><div class="t" style="left:810.40px;top:355.58px;font-size:12.4px;color:#f4f9ff;letter-spacing:0.444px;-webkit-text-stroke:0.18px #f4f9ff">https://image.tmdb.org/t/p/original/...</div></div><div class="a" style="left:2px;top:374.29px;width:30px;height:24.81px;background:linear-gradient(#cfe8f9,#b8dff7 40%,#92cff3)"></div><div class="a" style="left:2px;top:399.10px;width:30px;height:1px;background:#e8f4fc"></div><div class="a" style="left:0;top:373.29px;width:1px;height:25.81px;background:#6a8299"></div><div class="a" style="left:1px;top:373.29px;width:1px;height:25.81px;background:#a9cbe4"></div><div class="a" style="left:33px;top:374.29px;width:1165px;height:24.81px;background:#3399ff"></div><div class="a" style="left:32px;top:399.10px;width:1166px;height:1px;background:#a6d0fa"></div><div class="a" style="left:32px;top:373.29px;width:1px;height:25.81px;background:#a6d0fa"></div><div class="a" style="left:275.0px;top:373.29px;width:1px;height:25.81px;background:#a6d0fa"></div><div class="a" style="left:335.0px;top:373.29px;width:1px;height:25.81px;background:#a6d0fa"></div><div class="a" style="left:395.0px;top:373.29px;width:1px;height:25.81px;background:#a6d0fa"></div><div class="a" style="left:456.0px;top:373.29px;width:1px;height:25.81px;background:#a6d0fa"></div><div class="a" style="left:508.0px;top:373.29px;width:1px;height:25.81px;background:#a6d0fa"></div><div class="a" style="left:806.0px;top:373.29px;width:1px;height:25.81px;background:#a6d0fa"></div><div class="t" style="left:5.80px;top:381.73px;font-size:12.3px;color:#000;letter-spacing:0.819px;font-weight:700;-webkit-text-stroke:0.15px #000">113</div><div class="t" style="left:36.90px;top:380.87px;font-size:11.6px;color:#e2f0ff;letter-spacing:-0.764px;font-style:italic;-webkit-text-stroke:0.18px #e2f0ff">NULL</div><div class="t" style="left:280.00px;top:380.87px;font-size:11.6px;color:#e2f0ff;letter-spacing:-0.539px;font-style:italic;-webkit-text-stroke:0.18px #e2f0ff">NULL</div><div class="t" style="left:365.30px;top:380.87px;font-size:11.6px;color:#e2f0ff;letter-spacing:-0.764px;font-style:italic;-webkit-text-stroke:0.18px #e2f0ff">NULL</div><div class="t" style="left:425.70px;top:380.87px;font-size:11.6px;color:#e2f0ff;letter-spacing:-0.764px;font-style:italic;-webkit-text-stroke:0.18px #e2f0ff">NULL</div><div class="t" style="left:460.60px;top:380.87px;font-size:11.6px;color:#e2f0ff;letter-spacing:-0.639px;font-style:italic;-webkit-text-stroke:0.18px #e2f0ff">NULL</div><div class="t" style="left:512.10px;top:381.39px;font-size:12.4px;color:#f4f9ff;letter-spacing:0.160px;-webkit-text-stroke:0.18px #f4f9ff">Tmdb=2059</div><div class="a" style="left:0;top:0;width:1197px;height:833px;overflow:hidden"><div class="t" style="left:810.40px;top:381.39px;font-size:12.4px;color:#f4f9ff;letter-spacing:0.444px;-webkit-text-stroke:0.18px #f4f9ff">https://image.tmdb.org/t/p/original/...</div></div><div class="a" style="left:2px;top:400.10px;width:30px;height:24.81px;background:linear-gradient(#cfe8f9,#b8dff7 40%,#92cff3)"></div><div class="a" style="left:2px;top:424.91px;width:30px;height:1px;background:#e8f4fc"></div><div class="a" style="left:0;top:399.10px;width:1px;height:25.81px;background:#6a8299"></div><div class="a" style="left:1px;top:399.10px;width:1px;height:25.81px;background:#a9cbe4"></div><div class="a" style="left:33px;top:400.10px;width:1165px;height:24.81px;background:#3399ff"></div><div class="a" style="left:32px;top:424.91px;width:1166px;height:1px;background:#a6d0fa"></div><div class="a" style="left:32px;top:399.10px;width:1px;height:25.81px;background:#a6d0fa"></div><div class="a" style="left:275.0px;top:399.10px;width:1px;height:25.81px;background:#a6d0fa"></div><div class="a" style="left:335.0px;top:399.10px;width:1px;height:25.81px;background:#a6d0fa"></div><div class="a" style="left:395.0px;top:399.10px;width:1px;height:25.81px;background:#a6d0fa"></div><div class="a" style="left:456.0px;top:399.10px;width:1px;height:25.81px;background:#a6d0fa"></div><div class="a" style="left:508.0px;top:399.10px;width:1px;height:25.81px;background:#a6d0fa"></div><div class="a" style="left:806.0px;top:399.10px;width:1px;height:25.81px;background:#a6d0fa"></div><div class="t" style="left:5.80px;top:407.54px;font-size:12.3px;color:#000;letter-spacing:0.819px;font-weight:700;-webkit-text-stroke:0.15px #000">114</div><div class="t" style="left:36.90px;top:406.68px;font-size:11.6px;color:#e2f0ff;letter-spacing:-0.764px;font-style:italic;-webkit-text-stroke:0.18px #e2f0ff">NULL</div><div class="t" style="left:280.00px;top:406.68px;font-size:11.6px;color:#e2f0ff;letter-spacing:-0.539px;font-style:italic;-webkit-text-stroke:0.18px #e2f0ff">NULL</div><div class="t" style="left:365.30px;top:406.68px;font-size:11.6px;color:#e2f0ff;letter-spacing:-0.764px;font-style:italic;-webkit-text-stroke:0.18px #e2f0ff">NULL</div><div class="t" style="left:425.70px;top:406.68px;font-size:11.6px;color:#e2f0ff;letter-spacing:-0.764px;font-style:italic;-webkit-text-stroke:0.18px #e2f0ff">NULL</div><div class="t" style="left:460.60px;top:406.68px;font-size:11.6px;color:#e2f0ff;letter-spacing:-0.639px;font-style:italic;-webkit-text-stroke:0.18px #e2f0ff">NULL</div><div class="t" style="left:512.10px;top:407.20px;font-size:12.4px;color:#f4f9ff;letter-spacing:0.160px;-webkit-text-stroke:0.18px #f4f9ff">Tmdb=6623</div><div class="a" style="left:0;top:0;width:1197px;height:833px;overflow:hidden"><div class="t" style="left:810.40px;top:407.20px;font-size:12.4px;color:#f4f9ff;letter-spacing:0.444px;-webkit-text-stroke:0.18px #f4f9ff">https://image.tmdb.org/t/p/original/...</div></div><div class="a" style="left:2px;top:425.91px;width:30px;height:24.81px;background:linear-gradient(#cfe8f9,#b8dff7 40%,#92cff3)"></div><div class="a" style="left:2px;top:450.72px;width:30px;height:1px;background:#e8f4fc"></div><div class="a" style="left:0;top:424.91px;width:1px;height:25.81px;background:#6a8299"></div><div class="a" style="left:1px;top:424.91px;width:1px;height:25.81px;background:#a9cbe4"></div><div class="a" style="left:33px;top:425.91px;width:1165px;height:24.81px;background:#3399ff"></div><div class="a" style="left:32px;top:450.72px;width:1166px;height:1px;background:#a6d0fa"></div><div class="a" style="left:32px;top:424.91px;width:1px;height:25.81px;background:#a6d0fa"></div><div class="a" style="left:275.0px;top:424.91px;width:1px;height:25.81px;background:#a6d0fa"></div><div class="a" style="left:335.0px;top:424.91px;width:1px;height:25.81px;background:#a6d0fa"></div><div class="a" style="left:395.0px;top:424.91px;width:1px;height:25.81px;background:#a6d0fa"></div><div class="a" style="left:456.0px;top:424.91px;width:1px;height:25.81px;background:#a6d0fa"></div><div class="a" style="left:508.0px;top:424.91px;width:1px;height:25.81px;background:#a6d0fa"></div><div class="a" style="left:806.0px;top:424.91px;width:1px;height:25.81px;background:#a6d0fa"></div><div class="t" style="left:5.80px;top:433.35px;font-size:12.3px;color:#000;letter-spacing:0.819px;font-weight:700;-webkit-text-stroke:0.15px #000">115</div><div class="t" style="left:36.90px;top:432.49px;font-size:11.6px;color:#e2f0ff;letter-spacing:-0.764px;font-style:italic;-webkit-text-stroke:0.18px #e2f0ff">NULL</div><div class="t" style="left:280.00px;top:432.49px;font-size:11.6px;color:#e2f0ff;letter-spacing:-0.539px;font-style:italic;-webkit-text-stroke:0.18px #e2f0ff">NULL</div><div class="t" style="left:365.30px;top:432.49px;font-size:11.6px;color:#e2f0ff;letter-spacing:-0.764px;font-style:italic;-webkit-text-stroke:0.18px #e2f0ff">NULL</div><div class="t" style="left:425.70px;top:432.49px;font-size:11.6px;color:#e2f0ff;letter-spacing:-0.764px;font-style:italic;-webkit-text-stroke:0.18px #e2f0ff">NULL</div><div class="t" style="left:460.60px;top:432.49px;font-size:11.6px;color:#e2f0ff;letter-spacing:-0.639px;font-style:italic;-webkit-text-stroke:0.18px #e2f0ff">NULL</div><div class="t" style="left:512.10px;top:433.01px;font-size:12.4px;color:#f4f9ff;letter-spacing:0.160px;-webkit-text-stroke:0.18px #f4f9ff">Tmdb=206334</div><div class="a" style="left:0;top:0;width:1197px;height:833px;overflow:hidden"><div class="t" style="left:810.40px;top:433.01px;font-size:12.4px;color:#f4f9ff;letter-spacing:0.444px;-webkit-text-stroke:0.18px #f4f9ff">https://image.tmdb.org/t/p/original/...</div></div><div class="a" style="left:2px;top:451.72px;width:30px;height:24.81px;background:linear-gradient(#cfe8f9,#b8dff7 40%,#92cff3)"></div><div class="a" style="left:2px;top:476.53px;width:30px;height:1px;background:#e8f4fc"></div><div class="a" style="left:0;top:450.72px;width:1px;height:25.81px;background:#6a8299"></div><div class="a" style="left:1px;top:450.72px;width:1px;height:25.81px;background:#a9cbe4"></div><div class="a" style="left:33px;top:451.72px;width:1165px;height:24.81px;background:#3399ff"></div><div class="a" style="left:32px;top:476.53px;width:1166px;height:1px;background:#a6d0fa"></div><div class="a" style="left:32px;top:450.72px;width:1px;height:25.81px;background:#a6d0fa"></div><div class="a" style="left:275.0px;top:450.72px;width:1px;height:25.81px;background:#a6d0fa"></div><div class="a" style="left:335.0px;top:450.72px;width:1px;height:25.81px;background:#a6d0fa"></div><div class="a" style="left:395.0px;top:450.72px;width:1px;height:25.81px;background:#a6d0fa"></div><div class="a" style="left:456.0px;top:450.72px;width:1px;height:25.81px;background:#a6d0fa"></div><div class="a" style="left:508.0px;top:450.72px;width:1px;height:25.81px;background:#a6d0fa"></div><div class="a" style="left:806.0px;top:450.72px;width:1px;height:25.81px;background:#a6d0fa"></div><div class="t" style="left:5.80px;top:459.16px;font-size:12.3px;color:#000;letter-spacing:0.819px;font-weight:700;-webkit-text-stroke:0.15px #000">116</div><div class="t" style="left:36.90px;top:458.30px;font-size:11.6px;color:#e2f0ff;letter-spacing:-0.764px;font-style:italic;-webkit-text-stroke:0.18px #e2f0ff">NULL</div><div class="t" style="left:280.00px;top:458.30px;font-size:11.6px;color:#e2f0ff;letter-spacing:-0.539px;font-style:italic;-webkit-text-stroke:0.18px #e2f0ff">NULL</div><div class="t" style="left:365.30px;top:458.30px;font-size:11.6px;color:#e2f0ff;letter-spacing:-0.764px;font-style:italic;-webkit-text-stroke:0.18px #e2f0ff">NULL</div><div class="t" style="left:425.70px;top:458.30px;font-size:11.6px;color:#e2f0ff;letter-spacing:-0.764px;font-style:italic;-webkit-text-stroke:0.18px #e2f0ff">NULL</div><div class="t" style="left:460.60px;top:458.30px;font-size:11.6px;color:#e2f0ff;letter-spacing:-0.639px;font-style:italic;-webkit-text-stroke:0.18px #e2f0ff">NULL</div><div class="t" style="left:512.10px;top:458.82px;font-size:12.4px;color:#f4f9ff;letter-spacing:0.160px;-webkit-text-stroke:0.18px #f4f9ff">Tmdb=81217</div><div class="a" style="left:0;top:0;width:1197px;height:833px;overflow:hidden"><div class="t" style="left:810.40px;top:458.82px;font-size:12.4px;color:#f4f9ff;letter-spacing:0.444px;-webkit-text-stroke:0.18px #f4f9ff">https://image.tmdb.org/t/p/original/...</div></div><div class="a" style="left:2px;top:477.53px;width:30px;height:24.81px;background:linear-gradient(#cfe8f9,#b8dff7 40%,#92cff3)"></div><div class="a" style="left:2px;top:502.34px;width:30px;height:1px;background:#e8f4fc"></div><div class="a" style="left:0;top:476.53px;width:1px;height:25.81px;background:#6a8299"></div><div class="a" style="left:1px;top:476.53px;width:1px;height:25.81px;background:#a9cbe4"></div><div class="a" style="left:33px;top:477.53px;width:1165px;height:24.81px;background:#3399ff"></div><div class="a" style="left:32px;top:502.34px;width:1166px;height:1px;background:#a6d0fa"></div><div class="a" style="left:32px;top:476.53px;width:1px;height:25.81px;background:#a6d0fa"></div><div class="a" style="left:275.0px;top:476.53px;width:1px;height:25.81px;background:#a6d0fa"></div><div class="a" style="left:335.0px;top:476.53px;width:1px;height:25.81px;background:#a6d0fa"></div><div class="a" style="left:395.0px;top:476.53px;width:1px;height:25.81px;background:#a6d0fa"></div><div class="a" style="left:456.0px;top:476.53px;width:1px;height:25.81px;background:#a6d0fa"></div><div class="a" style="left:508.0px;top:476.53px;width:1px;height:25.81px;background:#a6d0fa"></div><div class="a" style="left:806.0px;top:476.53px;width:1px;height:25.81px;background:#a6d0fa"></div><div class="t" style="left:5.80px;top:484.97px;font-size:12.3px;color:#000;letter-spacing:0.819px;font-weight:700;-webkit-text-stroke:0.15px #000">117</div><div class="t" style="left:36.90px;top:484.11px;font-size:11.6px;color:#e2f0ff;letter-spacing:-0.764px;font-style:italic;-webkit-text-stroke:0.18px #e2f0ff">NULL</div><div class="t" style="left:280.00px;top:484.11px;font-size:11.6px;color:#e2f0ff;letter-spacing:-0.539px;font-style:italic;-webkit-text-stroke:0.18px #e2f0ff">NULL</div><div class="t" style="left:365.30px;top:484.11px;font-size:11.6px;color:#e2f0ff;letter-spacing:-0.764px;font-style:italic;-webkit-text-stroke:0.18px #e2f0ff">NULL</div><div class="t" style="left:425.70px;top:484.11px;font-size:11.6px;color:#e2f0ff;letter-spacing:-0.764px;font-style:italic;-webkit-text-stroke:0.18px #e2f0ff">NULL</div><div class="t" style="left:460.60px;top:484.11px;font-size:11.6px;color:#e2f0ff;letter-spacing:-0.639px;font-style:italic;-webkit-text-stroke:0.18px #e2f0ff">NULL</div><div class="t" style="left:512.10px;top:484.63px;font-size:12.4px;color:#f4f9ff;letter-spacing:0.160px;-webkit-text-stroke:0.18px #f4f9ff">Tmdb=93031</div><div class="a" style="left:0;top:0;width:1197px;height:833px;overflow:hidden"><div class="t" style="left:810.40px;top:484.63px;font-size:12.4px;color:#f4f9ff;letter-spacing:0.444px;-webkit-text-stroke:0.18px #f4f9ff">https://image.tmdb.org/t/p/original/...</div></div><div class="a" style="left:2px;top:503.34px;width:30px;height:24.81px;background:linear-gradient(#cfe8f9,#b8dff7 40%,#92cff3)"></div><div class="a" style="left:2px;top:528.15px;width:30px;height:1px;background:#e8f4fc"></div><div class="a" style="left:0;top:502.34px;width:1px;height:25.81px;background:#6a8299"></div><div class="a" style="left:1px;top:502.34px;width:1px;height:25.81px;background:#a9cbe4"></div><div class="a" style="left:33px;top:503.34px;width:1165px;height:24.81px;background:#3399ff"></div><div class="a" style="left:32px;top:528.15px;width:1166px;height:1px;background:#a6d0fa"></div><div class="a" style="left:32px;top:502.34px;width:1px;height:25.81px;background:#a6d0fa"></div><div class="a" style="left:275.0px;top:502.34px;width:1px;height:25.81px;background:#a6d0fa"></div><div class="a" style="left:335.0px;top:502.34px;width:1px;height:25.81px;background:#a6d0fa"></div><div class="a" style="left:395.0px;top:502.34px;width:1px;height:25.81px;background:#a6d0fa"></div><div class="a" style="left:456.0px;top:502.34px;width:1px;height:25.81px;background:#a6d0fa"></div><div class="a" style="left:508.0px;top:502.34px;width:1px;height:25.81px;background:#a6d0fa"></div><div class="a" style="left:806.0px;top:502.34px;width:1px;height:25.81px;background:#a6d0fa"></div><div class="t" style="left:5.80px;top:510.78px;font-size:12.3px;color:#000;letter-spacing:0.819px;font-weight:700;-webkit-text-stroke:0.15px #000">118</div><div class="t" style="left:36.90px;top:509.92px;font-size:11.6px;color:#e2f0ff;letter-spacing:-0.764px;font-style:italic;-webkit-text-stroke:0.18px #e2f0ff">NULL</div><div class="t" style="left:280.00px;top:509.92px;font-size:11.6px;color:#e2f0ff;letter-spacing:-0.539px;font-style:italic;-webkit-text-stroke:0.18px #e2f0ff">NULL</div><div class="t" style="left:365.30px;top:509.92px;font-size:11.6px;color:#e2f0ff;letter-spacing:-0.764px;font-style:italic;-webkit-text-stroke:0.18px #e2f0ff">NULL</div><div class="t" style="left:425.70px;top:509.92px;font-size:11.6px;color:#e2f0ff;letter-spacing:-0.764px;font-style:italic;-webkit-text-stroke:0.18px #e2f0ff">NULL</div><div class="t" style="left:460.60px;top:509.92px;font-size:11.6px;color:#e2f0ff;letter-spacing:-0.639px;font-style:italic;-webkit-text-stroke:0.18px #e2f0ff">NULL</div><div class="t" style="left:512.10px;top:510.44px;font-size:12.4px;color:#f4f9ff;letter-spacing:0.160px;-webkit-text-stroke:0.18px #f4f9ff">Tmdb=33501</div><div class="a" style="left:0;top:0;width:1197px;height:833px;overflow:hidden"><div class="t" style="left:810.40px;top:510.44px;font-size:12.4px;color:#f4f9ff;letter-spacing:0.444px;-webkit-text-stroke:0.18px #f4f9ff">https://image.tmdb.org/t/p/original/...</div></div><div class="a" style="left:2px;top:529.15px;width:30px;height:24.81px;background:linear-gradient(#fdfdfd,#f9f9fa 55%,#eceef1)"></div><div class="a" style="left:2px;top:553.96px;width:30px;height:1px;background:#dcdcdc"></div><div class="a" style="left:32px;top:553.96px;width:1166px;height:1px;background:#d9d9d9"></div><div class="a" style="left:32px;top:528.15px;width:1px;height:25.81px;background:#dcdcdc"></div><div class="a" style="left:275.0px;top:528.15px;width:1px;height:25.81px;background:#dadada"></div><div class="a" style="left:335.0px;top:528.15px;width:1px;height:25.81px;background:#dadada"></div><div class="a" style="left:395.0px;top:528.15px;width:1px;height:25.81px;background:#dadada"></div><div class="a" style="left:456.0px;top:528.15px;width:1px;height:25.81px;background:#dadada"></div><div class="a" style="left:508.0px;top:528.15px;width:1px;height:25.81px;background:#dadada"></div><div class="a" style="left:806.0px;top:528.15px;width:1px;height:25.81px;background:#dadada"></div><div class="t" style="left:5.40px;top:536.42px;font-size:12.5px;color:#000;letter-spacing:-0.046px;-webkit-text-stroke:0.15px #000">119</div><div class="t" style="left:36.90px;top:535.73px;font-size:11.6px;color:#c4c4c4;letter-spacing:-0.764px;font-style:italic;-webkit-text-stroke:0.25px #c4c4c4">NULL</div><div class="t" style="left:280.00px;top:535.73px;font-size:11.6px;color:#c4c4c4;letter-spacing:-0.539px;font-style:italic;-webkit-text-stroke:0.25px #c4c4c4">NULL</div><div class="t" style="left:365.30px;top:535.73px;font-size:11.6px;color:#c4c4c4;letter-spacing:-0.764px;font-style:italic;-webkit-text-stroke:0.25px #c4c4c4">NULL</div><div class="t" style="left:425.70px;top:535.73px;font-size:11.6px;color:#c4c4c4;letter-spacing:-0.764px;font-style:italic;-webkit-text-stroke:0.25px #c4c4c4">NULL</div><div class="t" style="left:460.60px;top:535.73px;font-size:11.6px;color:#c4c4c4;letter-spacing:-0.639px;font-style:italic;-webkit-text-stroke:0.25px #c4c4c4">NULL</div><div class="t" style="left:512.70px;top:535.73px;font-size:11.6px;color:#c4c4c4;letter-spacing:-0.764px;font-style:italic;-webkit-text-stroke:0.25px #c4c4c4">NULL</div><div class="a" style="left:0;top:0;width:1197px;height:833px;overflow:hidden"><div class="t" style="left:810.40px;top:536.25px;font-size:12.4px;color:#1e1e1e;letter-spacing:0.446px;-webkit-text-stroke:0.25px #1e1e1e">emby://genrecollage*637342343222457480*Primary*0*0*null</div></div><div class="a" style="left:2px;top:554.96px;width:30px;height:24.81px;background:linear-gradient(#fdfdfd,#f9f9fa 55%,#eceef1)"></div><div class="a" style="left:2px;top:579.77px;width:30px;height:1px;background:#dcdcdc"></div><div class="a" style="left:32px;top:579.77px;width:1166px;height:1px;background:#d9d9d9"></div><div class="a" style="left:32px;top:553.96px;width:1px;height:25.81px;background:#dcdcdc"></div><div class="a" style="left:275.0px;top:553.96px;width:1px;height:25.81px;background:#dadada"></div><div class="a" style="left:335.0px;top:553.96px;width:1px;height:25.81px;background:#dadada"></div><div class="a" style="left:395.0px;top:553.96px;width:1px;height:25.81px;background:#dadada"></div><div class="a" style="left:456.0px;top:553.96px;width:1px;height:25.81px;background:#dadada"></div><div class="a" style="left:508.0px;top:553.96px;width:1px;height:25.81px;background:#dadada"></div><div class="a" style="left:806.0px;top:553.96px;width:1px;height:25.81px;background:#dadada"></div><div class="t" style="left:5.40px;top:562.23px;font-size:12.5px;color:#000;letter-spacing:-0.353px;-webkit-text-stroke:0.15px #000">120</div><div class="t" style="left:36.90px;top:561.54px;font-size:11.6px;color:#c4c4c4;letter-spacing:-0.764px;font-style:italic;-webkit-text-stroke:0.25px #c4c4c4">NULL</div><div class="t" style="left:280.00px;top:561.54px;font-size:11.6px;color:#c4c4c4;letter-spacing:-0.539px;font-style:italic;-webkit-text-stroke:0.25px #c4c4c4">NULL</div><div class="t" style="left:365.30px;top:561.54px;font-size:11.6px;color:#c4c4c4;letter-spacing:-0.764px;font-style:italic;-webkit-text-stroke:0.25px #c4c4c4">NULL</div><div class="t" style="left:425.70px;top:561.54px;font-size:11.6px;color:#c4c4c4;letter-spacing:-0.764px;font-style:italic;-webkit-text-stroke:0.25px #c4c4c4">NULL</div><div class="t" style="left:460.60px;top:561.54px;font-size:11.6px;color:#c4c4c4;letter-spacing:-0.639px;font-style:italic;-webkit-text-stroke:0.25px #c4c4c4">NULL</div><div class="t" style="left:512.70px;top:561.54px;font-size:11.6px;color:#c4c4c4;letter-spacing:-0.764px;font-style:italic;-webkit-text-stroke:0.25px #c4c4c4">NULL</div><div class="a" style="left:0;top:0;width:1197px;height:833px;overflow:hidden"><div class="t" style="left:810.40px;top:562.06px;font-size:12.4px;color:#1e1e1e;letter-spacing:0.446px;-webkit-text-stroke:0.25px #1e1e1e">emby://genrecollage*637342343223134390*Primary*0*0*null</div></div><div class="a" style="left:2px;top:580.77px;width:30px;height:24.81px;background:linear-gradient(#fdfdfd,#f9f9fa 55%,#eceef1)"></div><div class="a" style="left:2px;top:605.58px;width:30px;height:1px;background:#dcdcdc"></div><div class="a" style="left:32px;top:605.58px;width:1166px;height:1px;background:#d9d9d9"></div><div class="a" style="left:32px;top:579.77px;width:1px;height:25.81px;background:#dcdcdc"></div><div class="a" style="left:275.0px;top:579.77px;width:1px;height:25.81px;background:#dadada"></div><div class="a" style="left:335.0px;top:579.77px;width:1px;height:25.81px;background:#dadada"></div><div class="a" style="left:395.0px;top:579.77px;width:1px;height:25.81px;background:#dadada"></div><div class="a" style="left:456.0px;top:579.77px;width:1px;height:25.81px;background:#dadada"></div><div class="a" style="left:508.0px;top:579.77px;width:1px;height:25.81px;background:#dadada"></div><div class="a" style="left:806.0px;top:579.77px;width:1px;height:25.81px;background:#dadada"></div><div class="t" style="left:5.40px;top:588.04px;font-size:12.5px;color:#000;letter-spacing:-0.353px;-webkit-text-stroke:0.15px #000">121</div><div class="t" style="left:36.90px;top:587.35px;font-size:11.6px;color:#c4c4c4;letter-spacing:-0.764px;font-style:italic;-webkit-text-stroke:0.25px #c4c4c4">NULL</div><div class="t" style="left:280.00px;top:587.35px;font-size:11.6px;color:#c4c4c4;letter-spacing:-0.539px;font-style:italic;-webkit-text-stroke:0.25px #c4c4c4">NULL</div><div class="t" style="left:365.30px;top:587.35px;font-size:11.6px;color:#c4c4c4;letter-spacing:-0.764px;font-style:italic;-webkit-text-stroke:0.25px #c4c4c4">NULL</div><div class="t" style="left:425.70px;top:587.35px;font-size:11.6px;color:#c4c4c4;letter-spacing:-0.764px;font-style:italic;-webkit-text-stroke:0.25px #c4c4c4">NULL</div><div class="t" style="left:460.60px;top:587.35px;font-size:11.6px;color:#c4c4c4;letter-spacing:-0.639px;font-style:italic;-webkit-text-stroke:0.25px #c4c4c4">NULL</div><div class="t" style="left:512.70px;top:587.35px;font-size:11.6px;color:#c4c4c4;letter-spacing:-0.764px;font-style:italic;-webkit-text-stroke:0.25px #c4c4c4">NULL</div><div class="a" style="left:0;top:0;width:1197px;height:833px;overflow:hidden"><div class="t" style="left:810.40px;top:587.87px;font-size:12.4px;color:#1e1e1e;letter-spacing:0.446px;-webkit-text-stroke:0.25px #1e1e1e">emby://genrecollage*637342343223204870*Primary*0*0*null</div></div><div class="a" style="left:2px;top:606.58px;width:30px;height:24.81px;background:linear-gradient(#fdfdfd,#f9f9fa 55%,#eceef1)"></div><div class="a" style="left:2px;top:631.39px;width:30px;height:1px;background:#dcdcdc"></div><div class="a" style="left:32px;top:631.39px;width:1166px;height:1px;background:#d9d9d9"></div><div class="a" style="left:32px;top:605.58px;width:1px;height:25.81px;background:#dcdcdc"></div><div class="a" style="left:275.0px;top:605.58px;width:1px;height:25.81px;background:#dadada"></div><div class="a" style="left:335.0px;top:605.58px;width:1px;height:25.81px;background:#dadada"></div><div class="a" style="left:395.0px;top:605.58px;width:1px;height:25.81px;background:#dadada"></div><div class="a" style="left:456.0px;top:605.58px;width:1px;height:25.81px;background:#dadada"></div><div class="a" style="left:508.0px;top:605.58px;width:1px;height:25.81px;background:#dadada"></div><div class="a" style="left:806.0px;top:605.58px;width:1px;height:25.81px;background:#dadada"></div><div class="t" style="left:5.40px;top:613.85px;font-size:12.5px;color:#000;letter-spacing:-0.353px;-webkit-text-stroke:0.15px #000">122</div><div class="t" style="left:36.90px;top:613.16px;font-size:11.6px;color:#c4c4c4;letter-spacing:-0.764px;font-style:italic;-webkit-text-stroke:0.25px #c4c4c4">NULL</div><div class="t" style="left:280.00px;top:613.16px;font-size:11.6px;color:#c4c4c4;letter-spacing:-0.539px;font-style:italic;-webkit-text-stroke:0.25px #c4c4c4">NULL</div><div class="t" style="left:365.30px;top:613.16px;font-size:11.6px;color:#c4c4c4;letter-spacing:-0.764px;font-style:italic;-webkit-text-stroke:0.25px #c4c4c4">NULL</div><div class="t" style="left:425.70px;top:613.16px;font-size:11.6px;color:#c4c4c4;letter-spacing:-0.764px;font-style:italic;-webkit-text-stroke:0.25px #c4c4c4">NULL</div><div class="t" style="left:460.60px;top:613.16px;font-size:11.6px;color:#c4c4c4;letter-spacing:-0.639px;font-style:italic;-webkit-text-stroke:0.25px #c4c4c4">NULL</div><div class="t" style="left:512.70px;top:613.16px;font-size:11.6px;color:#c4c4c4;letter-spacing:-0.764px;font-style:italic;-webkit-text-stroke:0.25px #c4c4c4">NULL</div><div class="a" style="left:0;top:0;width:1197px;height:833px;overflow:hidden"><div class="t" style="left:810.40px;top:613.68px;font-size:12.4px;color:#1e1e1e;letter-spacing:0.360px;-webkit-text-stroke:0.25px #1e1e1e">https://raw.github.com/MediaBrowser/MediaBrowser.Resources/master/images</div></div><div class="a" style="left:2px;top:632.39px;width:30px;height:24.81px;background:linear-gradient(#fdfdfd,#f9f9fa 55%,#eceef1)"></div><div class="a" style="left:2px;top:657.20px;width:30px;height:1px;background:#dcdcdc"></div><div class="a" style="left:32px;top:657.20px;width:1166px;height:1px;background:#d9d9d9"></div><div class="a" style="left:32px;top:631.39px;width:1px;height:25.81px;background:#dcdcdc"></div><div class="a" style="left:275.0px;top:631.39px;width:1px;height:25.81px;background:#dadada"></div><div class="a" style="left:335.0px;top:631.39px;width:1px;height:25.81px;background:#dadada"></div><div class="a" style="left:395.0px;top:631.39px;width:1px;height:25.81px;background:#dadada"></div><div class="a" style="left:456.0px;top:631.39px;width:1px;height:25.81px;background:#dadada"></div><div class="a" style="left:508.0px;top:631.39px;width:1px;height:25.81px;background:#dadada"></div><div class="a" style="left:806.0px;top:631.39px;width:1px;height:25.81px;background:#dadada"></div><div class="t" style="left:5.40px;top:639.66px;font-size:12.5px;color:#000;letter-spacing:-0.353px;-webkit-text-stroke:0.15px #000">123</div><div class="t" style="left:36.90px;top:638.97px;font-size:11.6px;color:#c4c4c4;letter-spacing:-0.764px;font-style:italic;-webkit-text-stroke:0.25px #c4c4c4">NULL</div><div class="t" style="left:280.00px;top:638.97px;font-size:11.6px;color:#c4c4c4;letter-spacing:-0.539px;font-style:italic;-webkit-text-stroke:0.25px #c4c4c4">NULL</div><div class="t" style="left:365.30px;top:638.97px;font-size:11.6px;color:#c4c4c4;letter-spacing:-0.764px;font-style:italic;-webkit-text-stroke:0.25px #c4c4c4">NULL</div><div class="t" style="left:425.70px;top:638.97px;font-size:11.6px;color:#c4c4c4;letter-spacing:-0.764px;font-style:italic;-webkit-text-stroke:0.25px #c4c4c4">NULL</div><div class="t" style="left:460.60px;top:638.97px;font-size:11.6px;color:#c4c4c4;letter-spacing:-0.639px;font-style:italic;-webkit-text-stroke:0.25px #c4c4c4">NULL</div><div class="t" style="left:512.70px;top:638.97px;font-size:11.6px;color:#c4c4c4;letter-spacing:-0.764px;font-style:italic;-webkit-text-stroke:0.25px #c4c4c4">NULL</div><div class="t" style="left:810.40px;top:638.97px;font-size:11.6px;color:#c4c4c4;letter-spacing:-0.764px;font-style:italic;-webkit-text-stroke:0.25px #c4c4c4">NULL</div><div class="a" style="left:2px;top:658.20px;width:30px;height:24.81px;background:linear-gradient(#fdfdfd,#f9f9fa 55%,#eceef1)"></div><div class="a" style="left:2px;top:683.01px;width:30px;height:1px;background:#dcdcdc"></div><div class="a" style="left:32px;top:683.01px;width:1166px;height:1px;background:#d9d9d9"></div><div class="a" style="left:32px;top:657.20px;width:1px;height:25.81px;background:#dcdcdc"></div><div class="a" style="left:275.0px;top:657.20px;width:1px;height:25.81px;background:#dadada"></div><div class="a" style="left:335.0px;top:657.20px;width:1px;height:25.81px;background:#dadada"></div><div class="a" style="left:395.0px;top:657.20px;width:1px;height:25.81px;background:#dadada"></div><div class="a" style="left:456.0px;top:657.20px;width:1px;height:25.81px;background:#dadada"></div><div class="a" style="left:508.0px;top:657.20px;width:1px;height:25.81px;background:#dadada"></div><div class="a" style="left:806.0px;top:657.20px;width:1px;height:25.81px;background:#dadada"></div><div class="t" style="left:5.40px;top:665.47px;font-size:12.5px;color:#000;letter-spacing:-0.353px;-webkit-text-stroke:0.15px #000">124</div><div class="t" style="left:36.90px;top:664.78px;font-size:11.6px;color:#c4c4c4;letter-spacing:-0.764px;font-style:italic;-webkit-text-stroke:0.25px #c4c4c4">NULL</div><div class="t" style="left:280.00px;top:664.78px;font-size:11.6px;color:#c4c4c4;letter-spacing:-0.539px;font-style:italic;-webkit-text-stroke:0.25px #c4c4c4">NULL</div><div class="t" style="left:365.30px;top:664.78px;font-size:11.6px;color:#c4c4c4;letter-spacing:-0.764px;font-style:italic;-webkit-text-stroke:0.25px #c4c4c4">NULL</div><div class="t" style="left:425.70px;top:664.78px;font-size:11.6px;color:#c4c4c4;letter-spacing:-0.764px;font-style:italic;-webkit-text-stroke:0.25px #c4c4c4">NULL</div><div class="t" style="left:460.60px;top:664.78px;font-size:11.6px;color:#c4c4c4;letter-spacing:-0.639px;font-style:italic;-webkit-text-stroke:0.25px #c4c4c4">NULL</div><div class="t" style="left:512.70px;top:664.78px;font-size:11.6px;color:#c4c4c4;letter-spacing:-0.764px;font-style:italic;-webkit-text-stroke:0.25px #c4c4c4">NULL</div><div class="t" style="left:810.40px;top:664.78px;font-size:11.6px;color:#c4c4c4;letter-spacing:-0.764px;font-style:italic;-webkit-text-stroke:0.25px #c4c4c4">NULL</div><div class="a" style="left:2px;top:684.01px;width:30px;height:24.81px;background:linear-gradient(#fdfdfd,#f9f9fa 55%,#eceef1)"></div><div class="a" style="left:2px;top:708.82px;width:30px;height:1px;background:#dcdcdc"></div><div class="a" style="left:32px;top:708.82px;width:1166px;height:1px;background:#d9d9d9"></div><div class="a" style="left:32px;top:683.01px;width:1px;height:25.81px;background:#dcdcdc"></div><div class="a" style="left:275.0px;top:683.01px;width:1px;height:25.81px;background:#dadada"></div><div class="a" style="left:335.0px;top:683.01px;width:1px;height:25.81px;background:#dadada"></div><div class="a" style="left:395.0px;top:683.01px;width:1px;height:25.81px;background:#dadada"></div><div class="a" style="left:456.0px;top:683.01px;width:1px;height:25.81px;background:#dadada"></div><div class="a" style="left:508.0px;top:683.01px;width:1px;height:25.81px;background:#dadada"></div><div class="a" style="left:806.0px;top:683.01px;width:1px;height:25.81px;background:#dadada"></div><div class="t" style="left:5.40px;top:691.28px;font-size:12.5px;color:#000;letter-spacing:-0.353px;-webkit-text-stroke:0.15px #000">125</div><div class="t" style="left:36.90px;top:690.59px;font-size:11.6px;color:#c4c4c4;letter-spacing:-0.764px;font-style:italic;-webkit-text-stroke:0.25px #c4c4c4">NULL</div><div class="t" style="left:280.00px;top:690.59px;font-size:11.6px;color:#c4c4c4;letter-spacing:-0.539px;font-style:italic;-webkit-text-stroke:0.25px #c4c4c4">NULL</div><div class="t" style="left:365.30px;top:690.59px;font-size:11.6px;color:#c4c4c4;letter-spacing:-0.764px;font-style:italic;-webkit-text-stroke:0.25px #c4c4c4">NULL</div><div class="t" style="left:425.70px;top:690.59px;font-size:11.6px;color:#c4c4c4;letter-spacing:-0.764px;font-style:italic;-webkit-text-stroke:0.25px #c4c4c4">NULL</div><div class="t" style="left:460.60px;top:690.59px;font-size:11.6px;color:#c4c4c4;letter-spacing:-0.639px;font-style:italic;-webkit-text-stroke:0.25px #c4c4c4">NULL</div><div class="t" style="left:512.70px;top:690.59px;font-size:11.6px;color:#c4c4c4;letter-spacing:-0.764px;font-style:italic;-webkit-text-stroke:0.25px #c4c4c4">NULL</div><div class="t" style="left:810.40px;top:690.59px;font-size:11.6px;color:#c4c4c4;letter-spacing:-0.764px;font-style:italic;-webkit-text-stroke:0.25px #c4c4c4">NULL</div><div class="a" style="left:2px;top:709.82px;width:30px;height:24.81px;background:linear-gradient(#fdfdfd,#f9f9fa 55%,#eceef1)"></div><div class="a" style="left:2px;top:734.63px;width:30px;height:1px;background:#dcdcdc"></div><div class="a" style="left:32px;top:734.63px;width:1166px;height:1px;background:#d9d9d9"></div><div class="a" style="left:32px;top:708.82px;width:1px;height:25.81px;background:#dcdcdc"></div><div class="a" style="left:275.0px;top:708.82px;width:1px;height:25.81px;background:#dadada"></div><div class="a" style="left:335.0px;top:708.82px;width:1px;height:25.81px;background:#dadada"></div><div class="a" style="left:395.0px;top:708.82px;width:1px;height:25.81px;background:#dadada"></div><div class="a" style="left:456.0px;top:708.82px;width:1px;height:25.81px;background:#dadada"></div><div class="a" style="left:508.0px;top:708.82px;width:1px;height:25.81px;background:#dadada"></div><div class="a" style="left:806.0px;top:708.82px;width:1px;height:25.81px;background:#dadada"></div><div class="t" style="left:5.40px;top:717.09px;font-size:12.5px;color:#000;letter-spacing:-0.353px;-webkit-text-stroke:0.15px #000">126</div><div class="t" style="left:36.90px;top:716.40px;font-size:11.6px;color:#c4c4c4;letter-spacing:-0.764px;font-style:italic;-webkit-text-stroke:0.25px #c4c4c4">NULL</div><div class="t" style="left:280.00px;top:716.40px;font-size:11.6px;color:#c4c4c4;letter-spacing:-0.539px;font-style:italic;-webkit-text-stroke:0.25px #c4c4c4">NULL</div><div class="t" style="left:365.30px;top:716.40px;font-size:11.6px;color:#c4c4c4;letter-spacing:-0.764px;font-style:italic;-webkit-text-stroke:0.25px #c4c4c4">NULL</div><div class="t" style="left:425.70px;top:716.40px;font-size:11.6px;color:#c4c4c4;letter-spacing:-0.764px;font-style:italic;-webkit-text-stroke:0.25px #c4c4c4">NULL</div><div class="t" style="left:460.60px;top:716.40px;font-size:11.6px;color:#c4c4c4;letter-spacing:-0.639px;font-style:italic;-webkit-text-stroke:0.25px #c4c4c4">NULL</div><div class="t" style="left:512.70px;top:716.40px;font-size:11.6px;color:#c4c4c4;letter-spacing:-0.764px;font-style:italic;-webkit-text-stroke:0.25px #c4c4c4">NULL</div><div class="t" style="left:810.40px;top:716.40px;font-size:11.6px;color:#c4c4c4;letter-spacing:-0.764px;font-style:italic;-webkit-text-stroke:0.25px #c4c4c4">NULL</div><div class="a" style="left:2px;top:735.63px;width:30px;height:24.81px;background:linear-gradient(#fdfdfd,#f9f9fa 55%,#eceef1)"></div><div class="a" style="left:2px;top:760.44px;width:30px;height:1px;background:#dcdcdc"></div><div class="a" style="left:32px;top:760.44px;width:1166px;height:1px;background:#d9d9d9"></div><div class="a" style="left:32px;top:734.63px;width:1px;height:25.81px;background:#dcdcdc"></div><div class="a" style="left:275.0px;top:734.63px;width:1px;height:25.81px;background:#dadada"></div><div class="a" style="left:335.0px;top:734.63px;width:1px;height:25.81px;background:#dadada"></div><div class="a" style="left:395.0px;top:734.63px;width:1px;height:25.81px;background:#dadada"></div><div class="a" style="left:456.0px;top:734.63px;width:1px;height:25.81px;background:#dadada"></div><div class="a" style="left:508.0px;top:734.63px;width:1px;height:25.81px;background:#dadada"></div><div class="a" style="left:806.0px;top:734.63px;width:1px;height:25.81px;background:#dadada"></div><div class="t" style="left:5.40px;top:742.90px;font-size:12.5px;color:#000;letter-spacing:-0.353px;-webkit-text-stroke:0.15px #000">127</div><div class="t" style="left:36.90px;top:742.21px;font-size:11.6px;color:#c4c4c4;letter-spacing:-0.764px;font-style:italic;-webkit-text-stroke:0.25px #c4c4c4">NULL</div><div class="t" style="left:280.00px;top:742.21px;font-size:11.6px;color:#c4c4c4;letter-spacing:-0.539px;font-style:italic;-webkit-text-stroke:0.25px #c4c4c4">NULL</div><div class="t" style="left:365.30px;top:742.21px;font-size:11.6px;color:#c4c4c4;letter-spacing:-0.764px;font-style:italic;-webkit-text-stroke:0.25px #c4c4c4">NULL</div><div class="t" style="left:425.70px;top:742.21px;font-size:11.6px;color:#c4c4c4;letter-spacing:-0.764px;font-style:italic;-webkit-text-stroke:0.25px #c4c4c4">NULL</div><div class="t" style="left:460.60px;top:742.21px;font-size:11.6px;color:#c4c4c4;letter-spacing:-0.639px;font-style:italic;-webkit-text-stroke:0.25px #c4c4c4">NULL</div><div class="t" style="left:512.70px;top:742.21px;font-size:11.6px;color:#c4c4c4;letter-spacing:-0.764px;font-style:italic;-webkit-text-stroke:0.25px #c4c4c4">NULL</div><div class="t" style="left:810.40px;top:742.21px;font-size:11.6px;color:#c4c4c4;letter-spacing:-0.764px;font-style:italic;-webkit-text-stroke:0.25px #c4c4c4">NULL</div><div class="a" style="left:2px;top:761.44px;width:30px;height:24.81px;background:linear-gradient(#fdfdfd,#f9f9fa 55%,#eceef1)"></div><div class="a" style="left:2px;top:786.25px;width:30px;height:1px;background:#dcdcdc"></div><div class="a" style="left:32px;top:786.25px;width:1166px;height:1px;background:#d9d9d9"></div><div class="a" style="left:32px;top:760.44px;width:1px;height:25.81px;background:#dcdcdc"></div><div class="a" style="left:275.0px;top:760.44px;width:1px;height:25.81px;background:#dadada"></div><div class="a" style="left:335.0px;top:760.44px;width:1px;height:25.81px;background:#dadada"></div><div class="a" style="left:395.0px;top:760.44px;width:1px;height:25.81px;background:#dadada"></div><div class="a" style="left:456.0px;top:760.44px;width:1px;height:25.81px;background:#dadada"></div><div class="a" style="left:508.0px;top:760.44px;width:1px;height:25.81px;background:#dadada"></div><div class="a" style="left:806.0px;top:760.44px;width:1px;height:25.81px;background:#dadada"></div><div class="t" style="left:5.40px;top:768.71px;font-size:12.5px;color:#000;letter-spacing:-0.353px;-webkit-text-stroke:0.15px #000">128</div><div class="t" style="left:36.90px;top:768.02px;font-size:11.6px;color:#c4c4c4;letter-spacing:-0.764px;font-style:italic;-webkit-text-stroke:0.25px #c4c4c4">NULL</div><div class="t" style="left:280.00px;top:768.02px;font-size:11.6px;color:#c4c4c4;letter-spacing:-0.539px;font-style:italic;-webkit-text-stroke:0.25px #c4c4c4">NULL</div><div class="t" style="left:365.30px;top:768.02px;font-size:11.6px;color:#c4c4c4;letter-spacing:-0.764px;font-style:italic;-webkit-text-stroke:0.25px #c4c4c4">NULL</div><div class="t" style="left:425.70px;top:768.02px;font-size:11.6px;color:#c4c4c4;letter-spacing:-0.764px;font-style:italic;-webkit-text-stroke:0.25px #c4c4c4">NULL</div><div class="t" style="left:460.60px;top:768.02px;font-size:11.6px;color:#c4c4c4;letter-spacing:-0.639px;font-style:italic;-webkit-text-stroke:0.25px #c4c4c4">NULL</div><div class="t" style="left:512.70px;top:768.02px;font-size:11.6px;color:#c4c4c4;letter-spacing:-0.764px;font-style:italic;-webkit-text-stroke:0.25px #c4c4c4">NULL</div><div class="t" style="left:810.40px;top:768.02px;font-size:11.6px;color:#c4c4c4;letter-spacing:-0.764px;font-style:italic;-webkit-text-stroke:0.25px #c4c4c4">NULL</div><div class="a" style="left:2px;top:787.25px;width:30px;height:24.81px;background:linear-gradient(#fdfdfd,#f9f9fa 55%,#eceef1)"></div><div class="a" style="left:2px;top:812.06px;width:30px;height:1px;background:#dcdcdc"></div><div class="a" style="left:32px;top:812.06px;width:1166px;height:1px;background:#d9d9d9"></div><div class="a" style="left:32px;top:786.25px;width:1px;height:25.81px;background:#dcdcdc"></div><div class="a" style="left:275.0px;top:786.25px;width:1px;height:25.81px;background:#dadada"></div><div class="a" style="left:335.0px;top:786.25px;width:1px;height:25.81px;background:#dadada"></div><div class="a" style="left:395.0px;top:786.25px;width:1px;height:25.81px;background:#dadada"></div><div class="a" style="left:456.0px;top:786.25px;width:1px;height:25.81px;background:#dadada"></div><div class="a" style="left:508.0px;top:786.25px;width:1px;height:25.81px;background:#dadada"></div><div class="a" style="left:806.0px;top:786.25px;width:1px;height:25.81px;background:#dadada"></div><div class="t" style="left:5.40px;top:794.52px;font-size:12.5px;color:#000;letter-spacing:-0.353px;-webkit-text-stroke:0.15px #000">129</div><div class="t" style="left:36.90px;top:793.83px;font-size:11.6px;color:#c4c4c4;letter-spacing:-0.764px;font-style:italic;-webkit-text-stroke:0.25px #c4c4c4">NULL</div><div class="t" style="left:280.00px;top:793.83px;font-size:11.6px;color:#c4c4c4;letter-spacing:-0.539px;font-style:italic;-webkit-text-stroke:0.25px #c4c4c4">NULL</div><div class="t" style="left:365.30px;top:793.83px;font-size:11.6px;color:#c4c4c4;letter-spacing:-0.764px;font-style:italic;-webkit-text-stroke:0.25px #c4c4c4">NULL</div><div class="t" style="left:425.70px;top:793.83px;font-size:11.6px;color:#c4c4c4;letter-spacing:-0.764px;font-style:italic;-webkit-text-stroke:0.25px #c4c4c4">NULL</div><div class="t" style="left:460.60px;top:793.83px;font-size:11.6px;color:#c4c4c4;letter-spacing:-0.639px;font-style:italic;-webkit-text-stroke:0.25px #c4c4c4">NULL</div><div class="t" style="left:512.70px;top:793.83px;font-size:11.6px;color:#c4c4c4;letter-spacing:-0.764px;font-style:italic;-webkit-text-stroke:0.25px #c4c4c4">NULL</div><div class="t" style="left:810.40px;top:793.83px;font-size:11.6px;color:#c4c4c4;letter-spacing:-0.764px;font-style:italic;-webkit-text-stroke:0.25px #c4c4c4">NULL</div><div class="a" style="left:2px;top:813.06px;width:30px;height:24.81px;background:linear-gradient(#fdfdfd,#f9f9fa 55%,#eceef1)"></div><div class="a" style="left:2px;top:837.87px;width:30px;height:1px;background:#dcdcdc"></div><div class="a" style="left:32px;top:837.87px;width:1166px;height:1px;background:#d9d9d9"></div><div class="a" style="left:32px;top:812.06px;width:1px;height:25.81px;background:#dcdcdc"></div><div class="a" style="left:275.0px;top:812.06px;width:1px;height:25.81px;background:#dadada"></div><div class="a" style="left:335.0px;top:812.06px;width:1px;height:25.81px;background:#dadada"></div><div class="a" style="left:395.0px;top:812.06px;width:1px;height:25.81px;background:#dadada"></div><div class="a" style="left:456.0px;top:812.06px;width:1px;height:25.81px;background:#dadada"></div><div class="a" style="left:508.0px;top:812.06px;width:1px;height:25.81px;background:#dadada"></div><div class="a" style="left:806.0px;top:812.06px;width:1px;height:25.81px;background:#dadada"></div><div class="t" style="left:5.40px;top:820.33px;font-size:12.5px;color:#000;letter-spacing:-0.353px;-webkit-text-stroke:0.15px #000">130</div><div class="t" style="left:36.90px;top:819.64px;font-size:11.6px;color:#c4c4c4;letter-spacing:-0.764px;font-style:italic;-webkit-text-stroke:0.25px #c4c4c4">NULL</div><div class="t" style="left:280.00px;top:819.64px;font-size:11.6px;color:#c4c4c4;letter-spacing:-0.539px;font-style:italic;-webkit-text-stroke:0.25px #c4c4c4">NULL</div><div class="t" style="left:365.30px;top:819.64px;font-size:11.6px;color:#c4c4c4;letter-spacing:-0.764px;font-style:italic;-webkit-text-stroke:0.25px #c4c4c4">NULL</div><div class="t" style="left:425.70px;top:819.64px;font-size:11.6px;color:#c4c4c4;letter-spacing:-0.764px;font-style:italic;-webkit-text-stroke:0.25px #c4c4c4">NULL</div><div class="t" style="left:460.60px;top:819.64px;font-size:11.6px;color:#c4c4c4;letter-spacing:-0.639px;font-style:italic;-webkit-text-stroke:0.25px #c4c4c4">NULL</div><div class="t" style="left:512.70px;top:819.64px;font-size:11.6px;color:#c4c4c4;letter-spacing:-0.764px;font-style:italic;-webkit-text-stroke:0.25px #c4c4c4">NULL</div><div class="t" style="left:810.40px;top:819.64px;font-size:11.6px;color:#c4c4c4;letter-spacing:-0.764px;font-style:italic;-webkit-text-stroke:0.25px #c4c4c4">NULL</div><div class="a" style="left:1198px;top:184px;width:1px;height:23px;background:#8a8a8a"></div></body></html>
